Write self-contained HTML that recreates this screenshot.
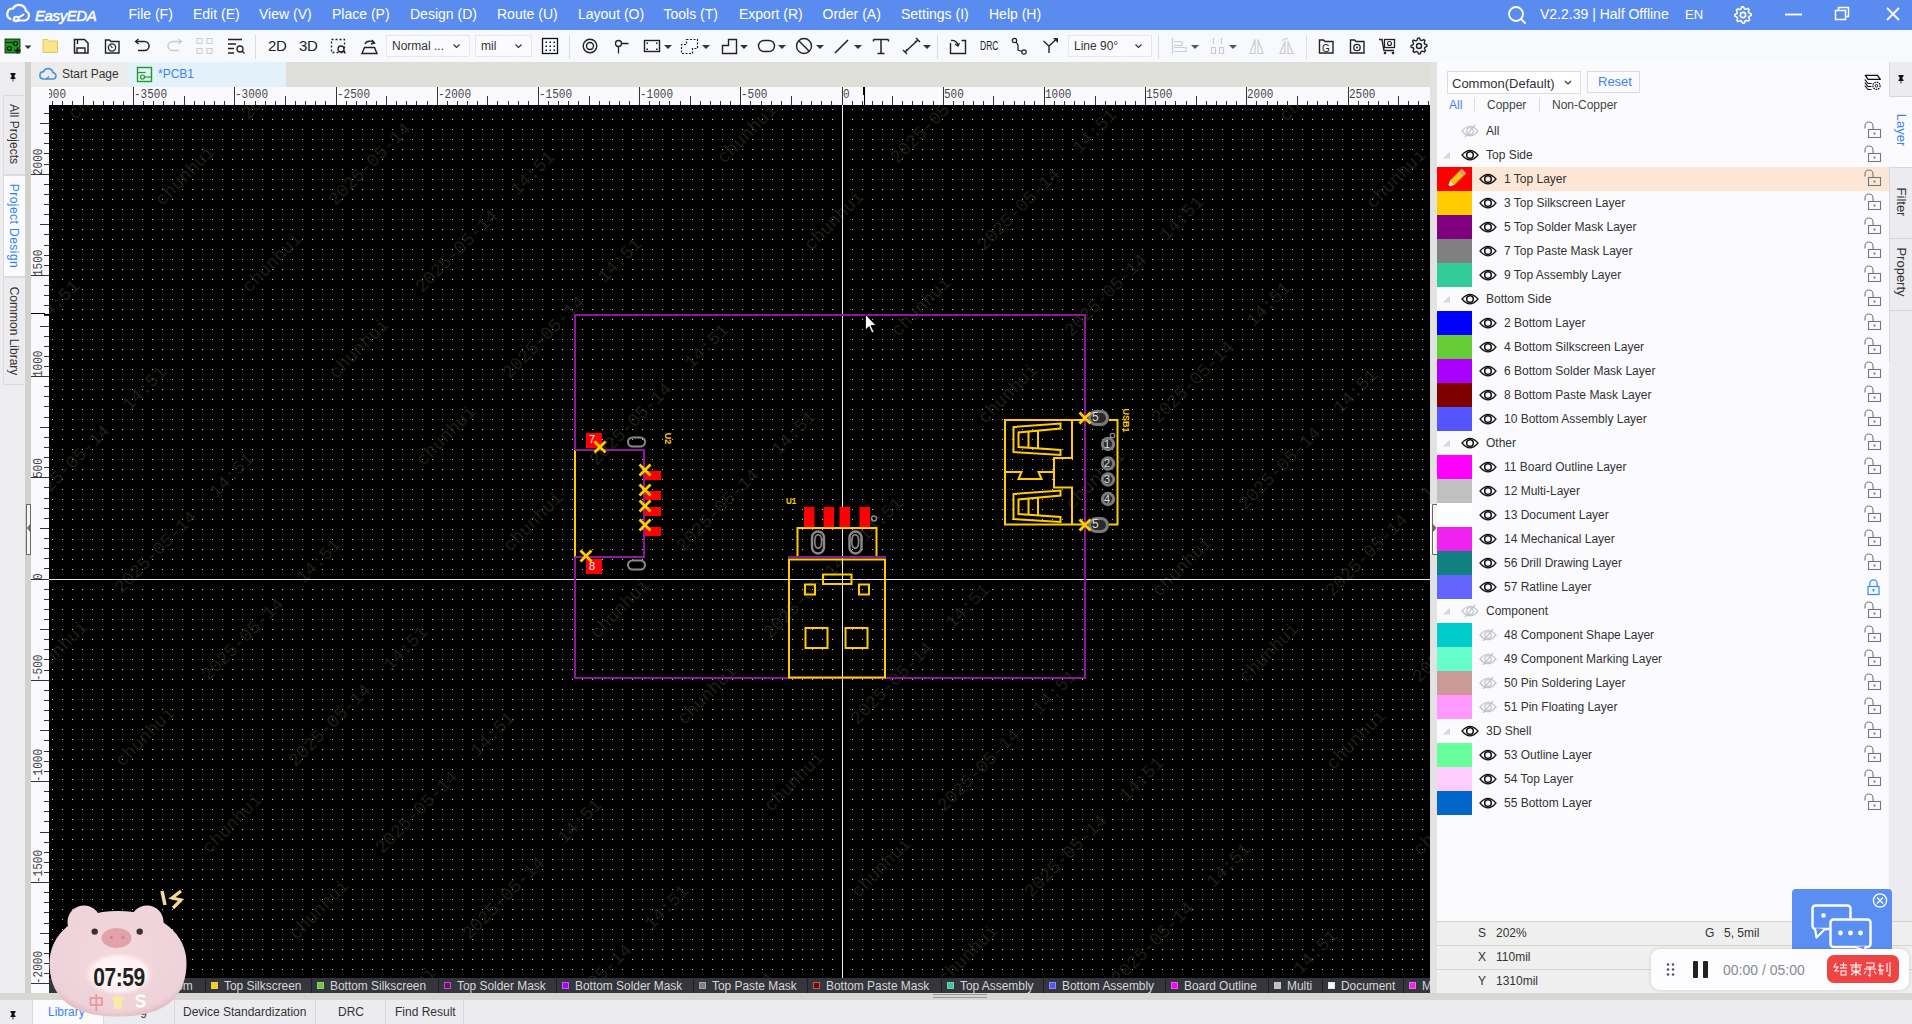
<!DOCTYPE html><html><head><meta charset="utf-8"><style>
*{margin:0;padding:0;box-sizing:border-box}
html,body{width:1912px;height:1024px;overflow:hidden;background:#f4f4f8;font-family:"Liberation Sans",sans-serif}
body{position:relative}
.a{position:absolute}
.t{position:absolute;white-space:nowrap;line-height:1}
svg{position:absolute;overflow:visible}
</style></head><body>
<div class="a" style="left:0px;top:0px;width:1912px;height:30px;background:#5a8cf0;"></div>
<svg style="left:0;top:0" width="110" height="30" viewBox="0 0 110 30">
<path d="M13.5 20.5 H24.5 A5 5 0 0 0 26 11 A7 7 0 0 0 13 8.5 A5.5 5.5 0 0 0 10.5 19" fill="none" stroke="#fff" stroke-width="2.2" stroke-linecap="round"/>
<circle cx="16.3" cy="19" r="2.3" fill="none" stroke="#fff" stroke-width="2"/>
<path d="M18.3 17.6 L23.5 14.6" stroke="#fff" stroke-width="2" stroke-linecap="round"/>
</svg>
<div class="t" style="left:35px;top:8px;font-size:15px;color:#fff;font-weight:normal;font-family:'Liberation Sans',sans-serif;font-style:italic;letter-spacing:-0.4px;-webkit-text-stroke:0.5px #fff">EasyEDA</div>
<div class="t" style="left:128.5px;top:7px;font-size:14px;color:#fff;font-weight:normal;font-family:'Liberation Sans',sans-serif;">File (F)</div>
<div class="t" style="left:193px;top:7px;font-size:14px;color:#fff;font-weight:normal;font-family:'Liberation Sans',sans-serif;">Edit (E)</div>
<div class="t" style="left:259px;top:7px;font-size:14px;color:#fff;font-weight:normal;font-family:'Liberation Sans',sans-serif;">View (V)</div>
<div class="t" style="left:332px;top:7px;font-size:14px;color:#fff;font-weight:normal;font-family:'Liberation Sans',sans-serif;">Place (P)</div>
<div class="t" style="left:410px;top:7px;font-size:14px;color:#fff;font-weight:normal;font-family:'Liberation Sans',sans-serif;">Design (D)</div>
<div class="t" style="left:497px;top:7px;font-size:14px;color:#fff;font-weight:normal;font-family:'Liberation Sans',sans-serif;">Route (U)</div>
<div class="t" style="left:578px;top:7px;font-size:14px;color:#fff;font-weight:normal;font-family:'Liberation Sans',sans-serif;">Layout (O)</div>
<div class="t" style="left:663.5px;top:7px;font-size:14px;color:#fff;font-weight:normal;font-family:'Liberation Sans',sans-serif;">Tools (T)</div>
<div class="t" style="left:739px;top:7px;font-size:14px;color:#fff;font-weight:normal;font-family:'Liberation Sans',sans-serif;">Export (R)</div>
<div class="t" style="left:822.5px;top:7px;font-size:14px;color:#fff;font-weight:normal;font-family:'Liberation Sans',sans-serif;">Order (A)</div>
<div class="t" style="left:901px;top:7px;font-size:14px;color:#fff;font-weight:normal;font-family:'Liberation Sans',sans-serif;">Settings (I)</div>
<div class="t" style="left:989px;top:7px;font-size:14px;color:#fff;font-weight:normal;font-family:'Liberation Sans',sans-serif;">Help (H)</div>
<svg style="left:1505px;top:4px" width="24" height="22" viewBox="0 0 24 22">
<circle cx="11" cy="10" r="7" fill="none" stroke="#fff" stroke-width="1.8"/><path d="M16 15 L20 19" stroke="#fff" stroke-width="1.8" stroke-linecap="round"/></svg>
<div class="t" style="left:1540px;top:7px;font-size:14px;color:#fff;font-weight:normal;font-family:'Liberation Sans',sans-serif;">V2.2.39 | Half Offline</div>
<div class="t" style="left:1685px;top:8px;font-size:13px;color:#fff;font-weight:normal;font-family:'Liberation Sans',sans-serif;">EN</div>
<svg style="left:1730px;top:2px" width="26" height="26" viewBox="0 0 26 26"><path d="M21.11 11.80 L21.19 13.40 L19.11 14.53 L18.70 15.69 L19.59 17.88 L18.51 19.08 L16.24 18.40 L15.12 18.93 L14.20 21.11 L12.60 21.19 L11.47 19.11 L10.31 18.70 L8.12 19.59 L6.92 18.51 L7.60 16.24 L7.07 15.12 L4.89 14.20 L4.81 12.60 L6.89 11.47 L7.30 10.31 L6.41 8.12 L7.49 6.92 L9.76 7.60 L10.88 7.07 L11.80 4.89 L13.40 4.81 L14.53 6.89 L15.69 7.30 L17.88 6.41 L19.08 7.49 L18.40 9.76 L18.93 10.88Z" fill="none" stroke="#fff" stroke-width="1.6" stroke-linejoin="round"/><circle cx="13" cy="13" r="2.65" fill="none" stroke="#fff" stroke-width="1.6"/></svg>
<svg style="left:1780px;top:0" width="132" height="30" viewBox="0 0 132 30">
<path d="M5 14.5 H22" stroke="#fff" stroke-width="1.8"/>
<rect x="55.5" y="10.5" width="10" height="9" fill="none" stroke="#fff" stroke-width="1.5"/>
<path d="M58.5 10.5 V7.5 H68.5 V16.5 H65.5" fill="none" stroke="#fff" stroke-width="1.5"/>
<path d="M107 8 L119 20 M119 8 L107 20" stroke="#fff" stroke-width="1.8"/>
</svg>
<div class="a" style="left:0px;top:30px;width:1912px;height:32px;background:#f8f9fd;"></div>
<svg style="left:0;top:0" width="1912" height="62" viewBox="0 0 1912 62"><rect x="5" y="39" width="15" height="14" fill="#1a9a1a" stroke="#111" stroke-width="0.8"/><circle cx="9.3" cy="48.5" r="2" fill="none" stroke="#111" stroke-width="1.2"/><circle cx="15.5" cy="43.5" r="2" fill="none" stroke="#111" stroke-width="1.2"/><path d="M6 42.5 h6 l2 1.5" fill="none" stroke="#111" stroke-width="1"/><path d="M17.5 47.5 v6 M14.5 50.5 h6" stroke="#111" stroke-width="1.5" fill="none"/><path d="M24.5 45.5 h7 l-3.5 3.5z" fill="#333"/><path d="M43 39.5 h5 l1.5 1.5 h8 v11.5 h-14.5z" fill="#f7e48c" stroke="#e3c65a" stroke-width="1"/><path d="M74.5 39.5 h10 l3.5 3.5 v10 h-13.5z" fill="none" stroke="#222" stroke-width="1.5"/><path d="M77 53 v-5 h8 v5 M77.5 40 v4" fill="none" stroke="#222" stroke-width="1.4"/><path d="M105.5 40 h4 l1.5 1.5 h8 v11.5 h-13.5z" fill="none" stroke="#222" stroke-width="1.4"/><circle cx="112" cy="47.5" r="3.6" fill="none" stroke="#222" stroke-width="1.3"/><path d="M110.5 45.5 l2 2.5" stroke="#222" stroke-width="1.2"/><path d="M136 41.5 h8.5 a4.5 4.5 0 0 1 0 9 h-6.5" fill="none" stroke="#222" stroke-width="1.5"/><path d="M138.5 39 l-3 2.5 l3 2.5" fill="none" stroke="#222" stroke-width="1.3"/><path d="M181 41.5 h-8.5 a4.5 4.5 0 0 0 0 9 h6.5" fill="none" stroke="#ccc" stroke-width="1.5"/><path d="M178.5 39 l3 2.5 l-3 2.5" fill="none" stroke="#ccc" stroke-width="1.3"/><rect x="197" y="38.5" width="5" height="5" fill="none" stroke="#ccc"/><rect x="207" y="38.5" width="5" height="5" fill="none" stroke="#ccc"/><rect x="197" y="48.5" width="5" height="5" fill="none" stroke="#ccc"/><rect x="207" y="48.5" width="5" height="5" fill="none" stroke="#ccc"/><path d="M228 39.5 h14 M228 44 h8 M228 48.5 h6 M228 53 h6" stroke="#222" stroke-width="1.3"/><circle cx="240" cy="49" r="3" fill="none" stroke="#222" stroke-width="1.3"/><path d="M242 51 l2.5 2.5" stroke="#222" stroke-width="1.3"/><path d="M255.5 35 v24" stroke="#ddd" stroke-width="1"/><rect x="331.5" y="39.5" width="13" height="13" fill="none" stroke="#222" stroke-width="1.3" stroke-dasharray="2 2"/><circle cx="341" cy="49" r="3" fill="#f8f9fd" stroke="#222" stroke-width="1.3"/><path d="M343 51 l2.5 2.5" stroke="#222" stroke-width="1.3"/><path d="M362 53.5 h15 l-2.5 -6 h-10z M365 44 a5 4 0 0 1 9 -1 M372 40 l2.5 3 l-3.5 1" fill="none" stroke="#222" stroke-width="1.4"/><rect x="386.5" y="35.5" width="83" height="21" fill="#fbfbff" stroke="#dde" stroke-width="1" stroke-dasharray="2 1"/><path d="M453.5 44.5 l3 3 l3 -3" fill="none" stroke="#333" stroke-width="1.2"/><rect x="475.5" y="35.5" width="56" height="21" fill="#fbfbff" stroke="#dde" stroke-width="1" stroke-dasharray="2 1"/><path d="M515.5 44.5 l3 3 l3 -3" fill="none" stroke="#333" stroke-width="1.2"/><rect x="542.5" y="38.5" width="15" height="15" fill="none" stroke="#111" stroke-width="1.3"/><rect x="545.5" y="41.5" width="1.5" height="1.5" fill="#111"/><rect x="545.5" y="45.5" width="1.5" height="1.5" fill="#111"/><rect x="545.5" y="49.5" width="1.5" height="1.5" fill="#111"/><rect x="549.5" y="41.5" width="1.5" height="1.5" fill="#111"/><rect x="549.5" y="45.5" width="1.5" height="1.5" fill="#111"/><rect x="549.5" y="49.5" width="1.5" height="1.5" fill="#111"/><rect x="553.5" y="41.5" width="1.5" height="1.5" fill="#111"/><rect x="553.5" y="45.5" width="1.5" height="1.5" fill="#111"/><rect x="553.5" y="49.5" width="1.5" height="1.5" fill="#111"/><path d="M569.5 35 v24" stroke="#ddd" stroke-width="1"/><circle cx="590" cy="46" r="6.8" fill="none" stroke="#222" stroke-width="1.4"/><circle cx="590" cy="46" r="3.5" fill="none" stroke="#222" stroke-width="1.4"/><circle cx="618.5" cy="43.5" r="3" fill="none" stroke="#222" stroke-width="1.3"/><path d="M618.5 46.5 v7 M621.5 43.5 h7" stroke="#222" stroke-width="1.3"/><rect x="644.5" y="40.5" width="15" height="11" fill="none" stroke="#222" stroke-width="1.4"/><rect x="646.5" y="42.5" width="1.5" height="1.5" fill="#222"/><rect x="656" y="42.5" width="1.5" height="1.5" fill="#222"/><rect x="646.5" y="48.5" width="1.5" height="1.5" fill="#222"/><rect x="656" y="48.5" width="1.5" height="1.5" fill="#222"/><path d="M664 45 h8 l-4 4z" fill="#333"/><path d="M686.5 39.5 h11 v9 h-5 v5 h-11 v-9 h5z" fill="none" stroke="#222" stroke-width="1.2" stroke-dasharray="2 1.5"/><path d="M702 45 h8 l-4 4z" fill="#333"/><path d="M722.5 53.5 v-8 h6 v-6 h8 v14z" fill="none" stroke="#222" stroke-width="1.4"/><path d="M740 45 h8 l-4 4z" fill="#333"/><rect x="758.5" y="40.5" width="16" height="11" rx="5.5" fill="none" stroke="#222" stroke-width="1.4"/><path d="M778 45 h8 l-4 4z" fill="#333"/><circle cx="804" cy="46" r="7.5" fill="none" stroke="#222" stroke-width="1.4"/><path d="M799 41 l10 10" stroke="#222" stroke-width="1.4"/><path d="M816 45 h8 l-4 4z" fill="#333"/><path d="M835 53 l13 -13" stroke="#222" stroke-width="1.6"/><path d="M854 45 h8 l-4 4z" fill="#333"/><path d="M873.5 39.5 h15 M881 39.5 v14 M877.5 53.5 h7 M873.5 39.5 v2 M888.5 39.5 v2" fill="none" stroke="#222" stroke-width="1.5"/><path d="M905 52 l13 -12 M903 50 l4 4 M916 38 l4 4 M906 49.5 l1.5 1.5 M915 41 l1.5 1.5" stroke="#222" stroke-width="1.4"/><path d="M923 45 h8 l-4 4z" fill="#333"/><path d="M937.5 35 v24" stroke="#ddd" stroke-width="1"/><path d="M950.5 43 v10.5 h15 v-13 h-4" fill="none" stroke="#222" stroke-width="1.4"/><path d="M951 40.5 a6 6 0 0 1 7 4.5 M955 44 l3 2 l1.5 -3" fill="none" stroke="#222" stroke-width="1.3"/><circle cx="1014.5" cy="40.5" r="2.2" fill="none" stroke="#222" stroke-width="1.2"/><circle cx="1024" cy="52" r="2.2" fill="none" stroke="#222" stroke-width="1.2"/><path d="M1016 42 l2 3 v5 l4 1.5" fill="none" stroke="#222" stroke-width="1.3"/><path d="M1043.5 41 l5.5 5 v7 M1049 46 l8 -7.5" fill="none" stroke="#222" stroke-width="1.4"/><path d="M1053.5 38.5 h4 v4" fill="#222" stroke="#222" stroke-width="1"/><rect x="1068.5" y="35.5" width="83" height="21" fill="#fbfbff" stroke="#dde" stroke-width="1" stroke-dasharray="2 1"/><path d="M1135.5 44.5 l3 3 l3 -3" fill="none" stroke="#333" stroke-width="1.2"/><path d="M1158.5 35 v24" stroke="#ddd" stroke-width="1"/><path d="M1172.5 38 v16 M1174 41.5 h8 v4 h-8 M1174 47.5 h12 v4 h-12" fill="none" stroke="#ccc" stroke-width="1.2"/><path d="M1191 45 h8 l-4 4z" fill="#555"/><path d="M1213.5 38 v6 M1221.5 38 v6 M1211.5 47.5 h4 v6 h-4z M1219.5 47.5 h4 v6 h-4z" fill="none" stroke="#ccc" stroke-width="1.2"/><path d="M1229 45 h8 l-4 4z" fill="#555"/><path d="M1250 53.5 l5 -14 v14z M1258 39.5 l5 14 h-5z" fill="none" stroke="#ccc" stroke-width="1.2"/><path d="M1280 53.5 l5 -12 v12z M1288 41.5 l5 12 h-5z M1282 41 a5 4 0 0 1 6 -2" fill="none" stroke="#ccc" stroke-width="1.2"/><path d="M1306.5 35 v24" stroke="#ddd" stroke-width="1"/><path d="M1319.5 40 h4 l1.5 1.5 h8 v11.5 h-13.5z" fill="none" stroke="#222" stroke-width="1.4"/><path d="M1350.5 40 h4 l1.5 1.5 h8 v11.5 h-13.5z" fill="none" stroke="#222" stroke-width="1.4"/><circle cx="1357" cy="47.5" r="3.2" fill="none" stroke="#222" stroke-width="1.3"/><circle cx="1357" cy="47.5" r="1" fill="#222"/><path d="M1379 39.5 h3 l2 11 h10" fill="none" stroke="#222" stroke-width="1.4"/><rect x="1384.5" y="39.5" width="10" height="8" fill="none" stroke="#222" stroke-width="1.3"/><circle cx="1389.5" cy="43.5" r="2" fill="none" stroke="#222" stroke-width="1.1"/><circle cx="1385" cy="53" r="1.3" fill="#222"/><circle cx="1393" cy="53" r="1.3" fill="#222"/><path d="M1426.91 44.83 L1426.99 46.39 L1424.82 47.46 L1424.42 48.57 L1425.43 50.77 L1424.37 51.93 L1422.08 51.15 L1421.02 51.65 L1420.17 53.91 L1418.61 53.99 L1417.54 51.82 L1416.43 51.42 L1414.23 52.43 L1413.07 51.37 L1413.85 49.08 L1413.35 48.02 L1411.09 47.17 L1411.01 45.61 L1413.18 44.54 L1413.58 43.43 L1412.57 41.23 L1413.63 40.07 L1415.92 40.85 L1416.98 40.35 L1417.83 38.09 L1419.39 38.01 L1420.46 40.18 L1421.57 40.58 L1423.77 39.57 L1424.93 40.63 L1424.15 42.92 L1424.65 43.98Z" fill="none" stroke="#222" stroke-width="1.4" stroke-linejoin="round"/><circle cx="1419" cy="46" r="2.52" fill="none" stroke="#222" stroke-width="1.4"/></svg>
<div class="t" style="left:268px;top:38px;font-size:15px;color:#222;font-weight:normal;font-family:'Liberation Sans',sans-serif;letter-spacing:-0.3px">2D</div>
<div class="t" style="left:299px;top:38px;font-size:15px;color:#222;font-weight:normal;font-family:'Liberation Sans',sans-serif;letter-spacing:-0.3px">3D</div>
<div class="t" style="left:980px;top:40px;font-size:12.5px;color:#222;font-weight:normal;font-family:'Liberation Sans',sans-serif;transform-origin:0 0;transform:scaleX(0.68)">DRC</div>
<div class="t" style="left:1322px;top:44px;font-size:10px;color:#222;font-weight:normal;font-family:'Liberation Sans',sans-serif;">G</div>
<div class="t" style="left:392px;top:40px;font-size:12px;color:#333;font-weight:normal;font-family:'Liberation Sans',sans-serif;">Normal ...</div>
<div class="t" style="left:481px;top:40px;font-size:12px;color:#333;font-weight:normal;font-family:'Liberation Sans',sans-serif;">mil</div>
<div class="t" style="left:1074px;top:40px;font-size:12px;color:#333;font-weight:normal;font-family:'Liberation Sans',sans-serif;">Line 90°</div>
<div class="a" style="left:0px;top:62px;width:25px;height:931px;background:#ededf0;"></div>
<div class="a" style="left:25px;top:62px;width:6px;height:931px;background:#d2d2cc;"></div>
<svg style="left:25px;top:500px" width="6" height="60" viewBox="0 0 6 60"><rect x="1.5" y="4.5" width="4" height="50" fill="#f6f6f8" stroke="#6a6a5a" stroke-width="1"/><path d="M5 24 L2 28 L5 32z" fill="#6a6a5a"/></svg>
<svg style="left:9.5px;top:73px" width="6" height="9" viewBox="0 0 6 9"><path d="M0.5 0 H5.5 V1.5 L4.5 2 V4 L5.5 5 V6 H0.5 V5 L1.5 4 V2 L0.5 1.5Z" fill="#111"/><path d="M3 6 V8.5" stroke="#333" stroke-width="1"/></svg>
<div class="a" style="left:3px;top:95px;width:22px;height:80px;background:#ececf0;border:1px solid #dcdce0;border-right:none"></div>
<div class="a" style="left:3px;top:175px;width:22px;height:102px;background:#fbfbfe;border:1px solid #dcdce0;border-right:none"></div>
<div class="a" style="left:3px;top:277px;width:22px;height:108px;background:#ececf0;border:1px solid #dcdce0;border-right:none"></div>
<div class="t" style="left:14px;top:133.5px;font-size:12px;color:#333;transform:translate(-50%,-50%) rotate(90deg)">All Projects</div>
<div class="t" style="left:14px;top:225.5px;font-size:12px;color:#2f7ff0;letter-spacing:0.45px;transform:translate(-50%,-50%) rotate(90deg)">Project Design</div>
<div class="t" style="left:14px;top:331px;font-size:12px;color:#333;transform:translate(-50%,-50%) rotate(90deg)">Common Library</div>
<div class="a" style="left:31px;top:62px;width:1399px;height:25px;background:#dedfd6;"></div>
<div class="a" style="left:31px;top:62px;width:96px;height:25px;background:#ececea;"></div>
<div class="a" style="left:127px;top:62px;width:159px;height:25px;background:#e2f1fa;"></div>
<svg style="left:0;top:62px" width="300" height="25" viewBox="0 0 300 25">
<path d="M42.5 17 h10 a3.2 3.2 0 0 0 0.5 -6.4 a5 5 0 0 0 -9.5 -1 a3.8 3.8 0 0 0 -1 7.4" fill="none" stroke="#4a90e2" stroke-width="1.6"/>
<path d="M46 17.5 l3 -3" stroke="#4a90e2" stroke-width="1.4"/>
<rect x="137.5" y="5.5" width="14" height="14" fill="none" stroke="#1aa01a" stroke-width="1.4"/>
<path d="M137.5 10.5 h8" stroke="#1aa01a" stroke-width="1.2"/>
<circle cx="142.5" cy="15" r="2" fill="none" stroke="#1aa01a" stroke-width="1.2"/><path d="M144.5 15 h7" stroke="#1aa01a" stroke-width="1.2"/>
</svg>
<div class="t" style="left:62px;top:68px;font-size:12px;color:#333;font-weight:normal;font-family:'Liberation Sans',sans-serif;">Start Page</div>
<div class="t" style="left:158px;top:68px;font-size:12px;color:#3b82f6;font-weight:normal;font-family:'Liberation Sans',sans-serif;">*PCB1</div>
<div class="a" style="left:31px;top:87px;width:1399px;height:18px;background:#fafafe;"></div>
<div class="a" style="left:31px;top:105px;width:18px;height:888px;background:#fafafe;"></div>
<svg style="left:0;top:0" width="1440" height="1000" viewBox="0 0 1440 1000"><path d="M52.5 101 V105" stroke="#333" stroke-width="1"/><path d="M62.5 101 V105" stroke="#333" stroke-width="1"/><path d="M72.5 101 V105" stroke="#333" stroke-width="1"/><path d="M83.5 96 V105" stroke="#333" stroke-width="1"/><path d="M93.5 101 V105" stroke="#333" stroke-width="1"/><path d="M103.5 101 V105" stroke="#333" stroke-width="1"/><path d="M113.5 101 V105" stroke="#333" stroke-width="1"/><path d="M123.5 101 V105" stroke="#333" stroke-width="1"/><path d="M133.5 87 V105" stroke="#333" stroke-width="1"/><path d="M143.5 101 V105" stroke="#333" stroke-width="1"/><path d="M153.5 101 V105" stroke="#333" stroke-width="1"/><path d="M163.5 101 V105" stroke="#333" stroke-width="1"/><path d="M174.5 101 V105" stroke="#333" stroke-width="1"/><path d="M184.5 96 V105" stroke="#333" stroke-width="1"/><path d="M194.5 101 V105" stroke="#333" stroke-width="1"/><path d="M204.5 101 V105" stroke="#333" stroke-width="1"/><path d="M214.5 101 V105" stroke="#333" stroke-width="1"/><path d="M224.5 101 V105" stroke="#333" stroke-width="1"/><path d="M234.5 87 V105" stroke="#333" stroke-width="1"/><path d="M244.5 101 V105" stroke="#333" stroke-width="1"/><path d="M255.5 101 V105" stroke="#333" stroke-width="1"/><path d="M265.5 101 V105" stroke="#333" stroke-width="1"/><path d="M275.5 101 V105" stroke="#333" stroke-width="1"/><path d="M285.5 96 V105" stroke="#333" stroke-width="1"/><path d="M295.5 101 V105" stroke="#333" stroke-width="1"/><path d="M305.5 101 V105" stroke="#333" stroke-width="1"/><path d="M315.5 101 V105" stroke="#333" stroke-width="1"/><path d="M325.5 101 V105" stroke="#333" stroke-width="1"/><path d="M336.5 87 V105" stroke="#333" stroke-width="1"/><path d="M346.5 101 V105" stroke="#333" stroke-width="1"/><path d="M356.5 101 V105" stroke="#333" stroke-width="1"/><path d="M366.5 101 V105" stroke="#333" stroke-width="1"/><path d="M376.5 101 V105" stroke="#333" stroke-width="1"/><path d="M386.5 96 V105" stroke="#333" stroke-width="1"/><path d="M396.5 101 V105" stroke="#333" stroke-width="1"/><path d="M406.5 101 V105" stroke="#333" stroke-width="1"/><path d="M416.5 101 V105" stroke="#333" stroke-width="1"/><path d="M427.5 101 V105" stroke="#333" stroke-width="1"/><path d="M437.5 87 V105" stroke="#333" stroke-width="1"/><path d="M447.5 101 V105" stroke="#333" stroke-width="1"/><path d="M457.5 101 V105" stroke="#333" stroke-width="1"/><path d="M467.5 101 V105" stroke="#333" stroke-width="1"/><path d="M477.5 101 V105" stroke="#333" stroke-width="1"/><path d="M487.5 96 V105" stroke="#333" stroke-width="1"/><path d="M497.5 101 V105" stroke="#333" stroke-width="1"/><path d="M508.5 101 V105" stroke="#333" stroke-width="1"/><path d="M518.5 101 V105" stroke="#333" stroke-width="1"/><path d="M528.5 101 V105" stroke="#333" stroke-width="1"/><path d="M538.5 87 V105" stroke="#333" stroke-width="1"/><path d="M548.5 101 V105" stroke="#333" stroke-width="1"/><path d="M558.5 101 V105" stroke="#333" stroke-width="1"/><path d="M568.5 101 V105" stroke="#333" stroke-width="1"/><path d="M578.5 101 V105" stroke="#333" stroke-width="1"/><path d="M589.5 96 V105" stroke="#333" stroke-width="1"/><path d="M599.5 101 V105" stroke="#333" stroke-width="1"/><path d="M609.5 101 V105" stroke="#333" stroke-width="1"/><path d="M619.5 101 V105" stroke="#333" stroke-width="1"/><path d="M629.5 101 V105" stroke="#333" stroke-width="1"/><path d="M639.5 87 V105" stroke="#333" stroke-width="1"/><path d="M649.5 101 V105" stroke="#333" stroke-width="1"/><path d="M659.5 101 V105" stroke="#333" stroke-width="1"/><path d="M669.5 101 V105" stroke="#333" stroke-width="1"/><path d="M680.5 101 V105" stroke="#333" stroke-width="1"/><path d="M690.5 96 V105" stroke="#333" stroke-width="1"/><path d="M700.5 101 V105" stroke="#333" stroke-width="1"/><path d="M710.5 101 V105" stroke="#333" stroke-width="1"/><path d="M720.5 101 V105" stroke="#333" stroke-width="1"/><path d="M730.5 101 V105" stroke="#333" stroke-width="1"/><path d="M740.5 87 V105" stroke="#333" stroke-width="1"/><path d="M750.5 101 V105" stroke="#333" stroke-width="1"/><path d="M761.5 101 V105" stroke="#333" stroke-width="1"/><path d="M771.5 101 V105" stroke="#333" stroke-width="1"/><path d="M781.5 101 V105" stroke="#333" stroke-width="1"/><path d="M791.5 96 V105" stroke="#333" stroke-width="1"/><path d="M801.5 101 V105" stroke="#333" stroke-width="1"/><path d="M811.5 101 V105" stroke="#333" stroke-width="1"/><path d="M821.5 101 V105" stroke="#333" stroke-width="1"/><path d="M831.5 101 V105" stroke="#333" stroke-width="1"/><path d="M842.5 87 V105" stroke="#333" stroke-width="1"/><path d="M852.5 101 V105" stroke="#333" stroke-width="1"/><path d="M862.5 101 V105" stroke="#333" stroke-width="1"/><path d="M872.5 101 V105" stroke="#333" stroke-width="1"/><path d="M882.5 101 V105" stroke="#333" stroke-width="1"/><path d="M892.5 96 V105" stroke="#333" stroke-width="1"/><path d="M902.5 101 V105" stroke="#333" stroke-width="1"/><path d="M912.5 101 V105" stroke="#333" stroke-width="1"/><path d="M922.5 101 V105" stroke="#333" stroke-width="1"/><path d="M933.5 101 V105" stroke="#333" stroke-width="1"/><path d="M943.5 87 V105" stroke="#333" stroke-width="1"/><path d="M953.5 101 V105" stroke="#333" stroke-width="1"/><path d="M963.5 101 V105" stroke="#333" stroke-width="1"/><path d="M973.5 101 V105" stroke="#333" stroke-width="1"/><path d="M983.5 101 V105" stroke="#333" stroke-width="1"/><path d="M993.5 96 V105" stroke="#333" stroke-width="1"/><path d="M1003.5 101 V105" stroke="#333" stroke-width="1"/><path d="M1014.5 101 V105" stroke="#333" stroke-width="1"/><path d="M1024.5 101 V105" stroke="#333" stroke-width="1"/><path d="M1034.5 101 V105" stroke="#333" stroke-width="1"/><path d="M1044.5 87 V105" stroke="#333" stroke-width="1"/><path d="M1054.5 101 V105" stroke="#333" stroke-width="1"/><path d="M1064.5 101 V105" stroke="#333" stroke-width="1"/><path d="M1074.5 101 V105" stroke="#333" stroke-width="1"/><path d="M1084.5 101 V105" stroke="#333" stroke-width="1"/><path d="M1095.5 96 V105" stroke="#333" stroke-width="1"/><path d="M1105.5 101 V105" stroke="#333" stroke-width="1"/><path d="M1115.5 101 V105" stroke="#333" stroke-width="1"/><path d="M1125.5 101 V105" stroke="#333" stroke-width="1"/><path d="M1135.5 101 V105" stroke="#333" stroke-width="1"/><path d="M1145.5 87 V105" stroke="#333" stroke-width="1"/><path d="M1155.5 101 V105" stroke="#333" stroke-width="1"/><path d="M1165.5 101 V105" stroke="#333" stroke-width="1"/><path d="M1175.5 101 V105" stroke="#333" stroke-width="1"/><path d="M1186.5 101 V105" stroke="#333" stroke-width="1"/><path d="M1196.5 96 V105" stroke="#333" stroke-width="1"/><path d="M1206.5 101 V105" stroke="#333" stroke-width="1"/><path d="M1216.5 101 V105" stroke="#333" stroke-width="1"/><path d="M1226.5 101 V105" stroke="#333" stroke-width="1"/><path d="M1236.5 101 V105" stroke="#333" stroke-width="1"/><path d="M1246.5 87 V105" stroke="#333" stroke-width="1"/><path d="M1256.5 101 V105" stroke="#333" stroke-width="1"/><path d="M1267.5 101 V105" stroke="#333" stroke-width="1"/><path d="M1277.5 101 V105" stroke="#333" stroke-width="1"/><path d="M1287.5 101 V105" stroke="#333" stroke-width="1"/><path d="M1297.5 96 V105" stroke="#333" stroke-width="1"/><path d="M1307.5 101 V105" stroke="#333" stroke-width="1"/><path d="M1317.5 101 V105" stroke="#333" stroke-width="1"/><path d="M1327.5 101 V105" stroke="#333" stroke-width="1"/><path d="M1337.5 101 V105" stroke="#333" stroke-width="1"/><path d="M1348.5 87 V105" stroke="#333" stroke-width="1"/><path d="M1358.5 101 V105" stroke="#333" stroke-width="1"/><path d="M1368.5 101 V105" stroke="#333" stroke-width="1"/><path d="M1378.5 101 V105" stroke="#333" stroke-width="1"/><path d="M1388.5 101 V105" stroke="#333" stroke-width="1"/><path d="M1398.5 96 V105" stroke="#333" stroke-width="1"/><path d="M1408.5 101 V105" stroke="#333" stroke-width="1"/><path d="M1418.5 101 V105" stroke="#333" stroke-width="1"/><path d="M1428.5 101 V105" stroke="#333" stroke-width="1"/>
<path d="M31 983.5 H49" stroke="#333" stroke-width="1"/><path d="M44 973.5 H49" stroke="#333" stroke-width="1"/><path d="M44 963.5 H49" stroke="#333" stroke-width="1"/><path d="M44 953.5 H49" stroke="#333" stroke-width="1"/><path d="M44 943.5 H49" stroke="#333" stroke-width="1"/><path d="M40 933.5 H49" stroke="#333" stroke-width="1"/><path d="M44 923.5 H49" stroke="#333" stroke-width="1"/><path d="M44 912.5 H49" stroke="#333" stroke-width="1"/><path d="M44 902.5 H49" stroke="#333" stroke-width="1"/><path d="M44 892.5 H49" stroke="#333" stroke-width="1"/><path d="M31 882.5 H49" stroke="#333" stroke-width="1"/><path d="M44 872.5 H49" stroke="#333" stroke-width="1"/><path d="M44 862.5 H49" stroke="#333" stroke-width="1"/><path d="M44 852.5 H49" stroke="#333" stroke-width="1"/><path d="M44 842.5 H49" stroke="#333" stroke-width="1"/><path d="M40 832.5 H49" stroke="#333" stroke-width="1"/><path d="M44 821.5 H49" stroke="#333" stroke-width="1"/><path d="M44 811.5 H49" stroke="#333" stroke-width="1"/><path d="M44 801.5 H49" stroke="#333" stroke-width="1"/><path d="M44 791.5 H49" stroke="#333" stroke-width="1"/><path d="M31 781.5 H49" stroke="#333" stroke-width="1"/><path d="M44 771.5 H49" stroke="#333" stroke-width="1"/><path d="M44 761.5 H49" stroke="#333" stroke-width="1"/><path d="M44 751.5 H49" stroke="#333" stroke-width="1"/><path d="M44 740.5 H49" stroke="#333" stroke-width="1"/><path d="M40 730.5 H49" stroke="#333" stroke-width="1"/><path d="M44 720.5 H49" stroke="#333" stroke-width="1"/><path d="M44 710.5 H49" stroke="#333" stroke-width="1"/><path d="M44 700.5 H49" stroke="#333" stroke-width="1"/><path d="M44 690.5 H49" stroke="#333" stroke-width="1"/><path d="M31 680.5 H49" stroke="#333" stroke-width="1"/><path d="M44 670.5 H49" stroke="#333" stroke-width="1"/><path d="M44 659.5 H49" stroke="#333" stroke-width="1"/><path d="M44 649.5 H49" stroke="#333" stroke-width="1"/><path d="M44 639.5 H49" stroke="#333" stroke-width="1"/><path d="M40 629.5 H49" stroke="#333" stroke-width="1"/><path d="M44 619.5 H49" stroke="#333" stroke-width="1"/><path d="M44 609.5 H49" stroke="#333" stroke-width="1"/><path d="M44 599.5 H49" stroke="#333" stroke-width="1"/><path d="M44 589.5 H49" stroke="#333" stroke-width="1"/><path d="M31 579.5 H49" stroke="#333" stroke-width="1"/><path d="M44 568.5 H49" stroke="#333" stroke-width="1"/><path d="M44 558.5 H49" stroke="#333" stroke-width="1"/><path d="M44 548.5 H49" stroke="#333" stroke-width="1"/><path d="M44 538.5 H49" stroke="#333" stroke-width="1"/><path d="M40 528.5 H49" stroke="#333" stroke-width="1"/><path d="M44 518.5 H49" stroke="#333" stroke-width="1"/><path d="M44 508.5 H49" stroke="#333" stroke-width="1"/><path d="M44 498.5 H49" stroke="#333" stroke-width="1"/><path d="M44 487.5 H49" stroke="#333" stroke-width="1"/><path d="M31 477.5 H49" stroke="#333" stroke-width="1"/><path d="M44 467.5 H49" stroke="#333" stroke-width="1"/><path d="M44 457.5 H49" stroke="#333" stroke-width="1"/><path d="M44 447.5 H49" stroke="#333" stroke-width="1"/><path d="M44 437.5 H49" stroke="#333" stroke-width="1"/><path d="M40 427.5 H49" stroke="#333" stroke-width="1"/><path d="M44 417.5 H49" stroke="#333" stroke-width="1"/><path d="M44 406.5 H49" stroke="#333" stroke-width="1"/><path d="M44 396.5 H49" stroke="#333" stroke-width="1"/><path d="M44 386.5 H49" stroke="#333" stroke-width="1"/><path d="M31 376.5 H49" stroke="#333" stroke-width="1"/><path d="M44 366.5 H49" stroke="#333" stroke-width="1"/><path d="M44 356.5 H49" stroke="#333" stroke-width="1"/><path d="M44 346.5 H49" stroke="#333" stroke-width="1"/><path d="M44 336.5 H49" stroke="#333" stroke-width="1"/><path d="M40 326.5 H49" stroke="#333" stroke-width="1"/><path d="M44 315.5 H49" stroke="#333" stroke-width="1"/><path d="M44 305.5 H49" stroke="#333" stroke-width="1"/><path d="M44 295.5 H49" stroke="#333" stroke-width="1"/><path d="M44 285.5 H49" stroke="#333" stroke-width="1"/><path d="M31 275.5 H49" stroke="#333" stroke-width="1"/><path d="M44 265.5 H49" stroke="#333" stroke-width="1"/><path d="M44 255.5 H49" stroke="#333" stroke-width="1"/><path d="M44 245.5 H49" stroke="#333" stroke-width="1"/><path d="M44 234.5 H49" stroke="#333" stroke-width="1"/><path d="M40 224.5 H49" stroke="#333" stroke-width="1"/><path d="M44 214.5 H49" stroke="#333" stroke-width="1"/><path d="M44 204.5 H49" stroke="#333" stroke-width="1"/><path d="M44 194.5 H49" stroke="#333" stroke-width="1"/><path d="M44 184.5 H49" stroke="#333" stroke-width="1"/><path d="M31 174.5 H49" stroke="#333" stroke-width="1"/><path d="M44 164.5 H49" stroke="#333" stroke-width="1"/><path d="M44 153.5 H49" stroke="#333" stroke-width="1"/><path d="M44 143.5 H49" stroke="#333" stroke-width="1"/><path d="M44 133.5 H49" stroke="#333" stroke-width="1"/><path d="M40 123.5 H49" stroke="#333" stroke-width="1"/><path d="M44 113.5 H49" stroke="#333" stroke-width="1"/></svg>
<div class="a" style="left:863px;top:87px;width:2px;height:8px;background:#000;"></div>
<div class="a" style="left:864px;top:95px;width:1px;height:10px;background:#000;"></div>
<div class="a" style="left:31px;top:313px;width:14px;height:1px;background:#000;"></div>
<div class="a" style="left:44px;top:314px;width:5px;height:1px;background:#000;"></div>
<div class="a" style="left:49px;top:87px;width:1381px;height:18px;overflow:hidden">
<div class="t" style="left:-16px;top:3px;font-size:11px;color:#444;font-family:'Liberation Mono',monospace;transform-origin:0 80%;transform:scaleY(1.17)">-4000</div>
<div class="t" style="left:85px;top:3px;font-size:11px;color:#444;font-family:'Liberation Mono',monospace;transform-origin:0 80%;transform:scaleY(1.17)">-3500</div>
<div class="t" style="left:186px;top:3px;font-size:11px;color:#444;font-family:'Liberation Mono',monospace;transform-origin:0 80%;transform:scaleY(1.17)">-3000</div>
<div class="t" style="left:288px;top:3px;font-size:11px;color:#444;font-family:'Liberation Mono',monospace;transform-origin:0 80%;transform:scaleY(1.17)">-2500</div>
<div class="t" style="left:389px;top:3px;font-size:11px;color:#444;font-family:'Liberation Mono',monospace;transform-origin:0 80%;transform:scaleY(1.17)">-2000</div>
<div class="t" style="left:490px;top:3px;font-size:11px;color:#444;font-family:'Liberation Mono',monospace;transform-origin:0 80%;transform:scaleY(1.17)">-1500</div>
<div class="t" style="left:591px;top:3px;font-size:11px;color:#444;font-family:'Liberation Mono',monospace;transform-origin:0 80%;transform:scaleY(1.17)">-1000</div>
<div class="t" style="left:692px;top:3px;font-size:11px;color:#444;font-family:'Liberation Mono',monospace;transform-origin:0 80%;transform:scaleY(1.17)">-500</div>
<div class="t" style="left:794px;top:3px;font-size:11px;color:#444;font-family:'Liberation Mono',monospace;transform-origin:0 80%;transform:scaleY(1.17)">0</div>
<div class="t" style="left:895px;top:3px;font-size:11px;color:#444;font-family:'Liberation Mono',monospace;transform-origin:0 80%;transform:scaleY(1.17)">500</div>
<div class="t" style="left:996px;top:3px;font-size:11px;color:#444;font-family:'Liberation Mono',monospace;transform-origin:0 80%;transform:scaleY(1.17)">1000</div>
<div class="t" style="left:1097px;top:3px;font-size:11px;color:#444;font-family:'Liberation Mono',monospace;transform-origin:0 80%;transform:scaleY(1.17)">1500</div>
<div class="t" style="left:1198px;top:3px;font-size:11px;color:#444;font-family:'Liberation Mono',monospace;transform-origin:0 80%;transform:scaleY(1.17)">2000</div>
<div class="t" style="left:1300px;top:3px;font-size:11px;color:#444;font-family:'Liberation Mono',monospace;transform-origin:0 80%;transform:scaleY(1.17)">2500</div>
</div>
<div class="t" style="left:33px;top:984px;font-size:11px;color:#444;font-family:'Liberation Mono',monospace;transform-origin:0 0;transform:rotate(-90deg) scaleY(1.17)">-2000</div>
<div class="t" style="left:33px;top:883px;font-size:11px;color:#444;font-family:'Liberation Mono',monospace;transform-origin:0 0;transform:rotate(-90deg) scaleY(1.17)">-1500</div>
<div class="t" style="left:33px;top:782px;font-size:11px;color:#444;font-family:'Liberation Mono',monospace;transform-origin:0 0;transform:rotate(-90deg) scaleY(1.17)">-1000</div>
<div class="t" style="left:33px;top:681px;font-size:11px;color:#444;font-family:'Liberation Mono',monospace;transform-origin:0 0;transform:rotate(-90deg) scaleY(1.17)">-500</div>
<div class="t" style="left:33px;top:580px;font-size:11px;color:#444;font-family:'Liberation Mono',monospace;transform-origin:0 0;transform:rotate(-90deg) scaleY(1.17)">0</div>
<div class="t" style="left:33px;top:478px;font-size:11px;color:#444;font-family:'Liberation Mono',monospace;transform-origin:0 0;transform:rotate(-90deg) scaleY(1.17)">500</div>
<div class="t" style="left:33px;top:377px;font-size:11px;color:#444;font-family:'Liberation Mono',monospace;transform-origin:0 0;transform:rotate(-90deg) scaleY(1.17)">1000</div>
<div class="t" style="left:33px;top:276px;font-size:11px;color:#444;font-family:'Liberation Mono',monospace;transform-origin:0 0;transform:rotate(-90deg) scaleY(1.17)">1500</div>
<div class="t" style="left:33px;top:175px;font-size:11px;color:#444;font-family:'Liberation Mono',monospace;transform-origin:0 0;transform:rotate(-90deg) scaleY(1.17)">2000</div>
<svg style="left:0;top:0" width="1440" height="1000" viewBox="0 0 1440 1000"><defs><pattern id="dots" x="0" y="0" width="10" height="10" patternUnits="userSpaceOnUse"><rect x="2" y="9" width="1" height="1" fill="#c8c8d8"/></pattern><clipPath id="cv"><rect x="49" y="105" width="1381" height="873"/></clipPath></defs><rect x="49" y="105" width="1381" height="873" fill="#000"/><rect x="49" y="105" width="1381" height="873" fill="url(#dots)"/></svg>
<div class="a" style="left:49px;top:105px;width:1381px;height:873px;overflow:hidden">
<div class="t" style="left:-178.0px;top:31.5px;font-size:18px;font-family:'Liberation Mono',monospace;color:#1f1f15;transform-origin:0 100%;transform:rotate(-45deg)">14:51</div>
<div class="t" style="left:29.0px;top:-0.5px;font-size:18px;font-family:'Liberation Mono',monospace;color:#1f1f15;transform-origin:0 100%;transform:rotate(-45deg)">chunhui</div>
<div class="t" style="left:202.0px;top:-0.5px;font-size:18px;font-family:'Liberation Mono',monospace;color:#1f1f15;transform-origin:0 100%;transform:rotate(-45deg)">2025-05-14</div>
<div class="t" style="left:384.0px;top:-10.5px;font-size:18px;font-family:'Liberation Mono',monospace;color:#1f1f15;transform-origin:0 100%;transform:rotate(-45deg)">14:51</div>
<div class="t" style="left:-91.0px;top:118.0px;font-size:18px;font-family:'Liberation Mono',monospace;color:#1f1f15;transform-origin:0 100%;transform:rotate(-45deg)">14:51</div>
<div class="t" style="left:116.0px;top:86.0px;font-size:18px;font-family:'Liberation Mono',monospace;color:#1f1f15;transform-origin:0 100%;transform:rotate(-45deg)">chunhui</div>
<div class="t" style="left:289.0px;top:86.0px;font-size:18px;font-family:'Liberation Mono',monospace;color:#1f1f15;transform-origin:0 100%;transform:rotate(-45deg)">2025-05-14</div>
<div class="t" style="left:471.0px;top:76.0px;font-size:18px;font-family:'Liberation Mono',monospace;color:#1f1f15;transform-origin:0 100%;transform:rotate(-45deg)">14:51</div>
<div class="t" style="left:678.0px;top:44.0px;font-size:18px;font-family:'Liberation Mono',monospace;color:#1f1f15;transform-origin:0 100%;transform:rotate(-45deg)">chunhui</div>
<div class="t" style="left:851.0px;top:44.0px;font-size:18px;font-family:'Liberation Mono',monospace;color:#1f1f15;transform-origin:0 100%;transform:rotate(-45deg)">2025-05-14</div>
<div class="t" style="left:1033.0px;top:34.0px;font-size:18px;font-family:'Liberation Mono',monospace;color:#1f1f15;transform-origin:0 100%;transform:rotate(-45deg)">14:51</div>
<div class="t" style="left:1240.0px;top:2.0px;font-size:18px;font-family:'Liberation Mono',monospace;color:#1f1f15;transform-origin:0 100%;transform:rotate(-45deg)">chunhui</div>
<div class="t" style="left:-186.0px;top:214.5px;font-size:18px;font-family:'Liberation Mono',monospace;color:#1f1f15;transform-origin:0 100%;transform:rotate(-45deg)">2025-05-14</div>
<div class="t" style="left:-4.0px;top:204.5px;font-size:18px;font-family:'Liberation Mono',monospace;color:#1f1f15;transform-origin:0 100%;transform:rotate(-45deg)">14:51</div>
<div class="t" style="left:203.0px;top:172.5px;font-size:18px;font-family:'Liberation Mono',monospace;color:#1f1f15;transform-origin:0 100%;transform:rotate(-45deg)">chunhui</div>
<div class="t" style="left:376.0px;top:172.5px;font-size:18px;font-family:'Liberation Mono',monospace;color:#1f1f15;transform-origin:0 100%;transform:rotate(-45deg)">2025-05-14</div>
<div class="t" style="left:558.0px;top:162.5px;font-size:18px;font-family:'Liberation Mono',monospace;color:#1f1f15;transform-origin:0 100%;transform:rotate(-45deg)">14:51</div>
<div class="t" style="left:765.0px;top:130.5px;font-size:18px;font-family:'Liberation Mono',monospace;color:#1f1f15;transform-origin:0 100%;transform:rotate(-45deg)">chunhui</div>
<div class="t" style="left:938.0px;top:130.5px;font-size:18px;font-family:'Liberation Mono',monospace;color:#1f1f15;transform-origin:0 100%;transform:rotate(-45deg)">2025-05-14</div>
<div class="t" style="left:1120.0px;top:120.5px;font-size:18px;font-family:'Liberation Mono',monospace;color:#1f1f15;transform-origin:0 100%;transform:rotate(-45deg)">14:51</div>
<div class="t" style="left:1327.0px;top:88.5px;font-size:18px;font-family:'Liberation Mono',monospace;color:#1f1f15;transform-origin:0 100%;transform:rotate(-45deg)">chunhui</div>
<div class="t" style="left:-99.0px;top:301.0px;font-size:18px;font-family:'Liberation Mono',monospace;color:#1f1f15;transform-origin:0 100%;transform:rotate(-45deg)">2025-05-14</div>
<div class="t" style="left:83.0px;top:291.0px;font-size:18px;font-family:'Liberation Mono',monospace;color:#1f1f15;transform-origin:0 100%;transform:rotate(-45deg)">14:51</div>
<div class="t" style="left:290.0px;top:259.0px;font-size:18px;font-family:'Liberation Mono',monospace;color:#1f1f15;transform-origin:0 100%;transform:rotate(-45deg)">chunhui</div>
<div class="t" style="left:463.0px;top:259.0px;font-size:18px;font-family:'Liberation Mono',monospace;color:#1f1f15;transform-origin:0 100%;transform:rotate(-45deg)">2025-05-14</div>
<div class="t" style="left:645.0px;top:249.0px;font-size:18px;font-family:'Liberation Mono',monospace;color:#1f1f15;transform-origin:0 100%;transform:rotate(-45deg)">14:51</div>
<div class="t" style="left:852.0px;top:217.0px;font-size:18px;font-family:'Liberation Mono',monospace;color:#1f1f15;transform-origin:0 100%;transform:rotate(-45deg)">chunhui</div>
<div class="t" style="left:1025.0px;top:217.0px;font-size:18px;font-family:'Liberation Mono',monospace;color:#1f1f15;transform-origin:0 100%;transform:rotate(-45deg)">2025-05-14</div>
<div class="t" style="left:1207.0px;top:207.0px;font-size:18px;font-family:'Liberation Mono',monospace;color:#1f1f15;transform-origin:0 100%;transform:rotate(-45deg)">14:51</div>
<div class="t" style="left:-185.0px;top:387.5px;font-size:18px;font-family:'Liberation Mono',monospace;color:#1f1f15;transform-origin:0 100%;transform:rotate(-45deg)">chunhui</div>
<div class="t" style="left:-12.0px;top:387.5px;font-size:18px;font-family:'Liberation Mono',monospace;color:#1f1f15;transform-origin:0 100%;transform:rotate(-45deg)">2025-05-14</div>
<div class="t" style="left:170.0px;top:377.5px;font-size:18px;font-family:'Liberation Mono',monospace;color:#1f1f15;transform-origin:0 100%;transform:rotate(-45deg)">14:51</div>
<div class="t" style="left:377.0px;top:345.5px;font-size:18px;font-family:'Liberation Mono',monospace;color:#1f1f15;transform-origin:0 100%;transform:rotate(-45deg)">chunhui</div>
<div class="t" style="left:550.0px;top:345.5px;font-size:18px;font-family:'Liberation Mono',monospace;color:#1f1f15;transform-origin:0 100%;transform:rotate(-45deg)">2025-05-14</div>
<div class="t" style="left:732.0px;top:335.5px;font-size:18px;font-family:'Liberation Mono',monospace;color:#1f1f15;transform-origin:0 100%;transform:rotate(-45deg)">14:51</div>
<div class="t" style="left:939.0px;top:303.5px;font-size:18px;font-family:'Liberation Mono',monospace;color:#1f1f15;transform-origin:0 100%;transform:rotate(-45deg)">chunhui</div>
<div class="t" style="left:1112.0px;top:303.5px;font-size:18px;font-family:'Liberation Mono',monospace;color:#1f1f15;transform-origin:0 100%;transform:rotate(-45deg)">2025-05-14</div>
<div class="t" style="left:1294.0px;top:293.5px;font-size:18px;font-family:'Liberation Mono',monospace;color:#1f1f15;transform-origin:0 100%;transform:rotate(-45deg)">14:51</div>
<div class="t" style="left:-98.0px;top:474.0px;font-size:18px;font-family:'Liberation Mono',monospace;color:#1f1f15;transform-origin:0 100%;transform:rotate(-45deg)">chunhui</div>
<div class="t" style="left:75.0px;top:474.0px;font-size:18px;font-family:'Liberation Mono',monospace;color:#1f1f15;transform-origin:0 100%;transform:rotate(-45deg)">2025-05-14</div>
<div class="t" style="left:257.0px;top:464.0px;font-size:18px;font-family:'Liberation Mono',monospace;color:#1f1f15;transform-origin:0 100%;transform:rotate(-45deg)">14:51</div>
<div class="t" style="left:464.0px;top:432.0px;font-size:18px;font-family:'Liberation Mono',monospace;color:#1f1f15;transform-origin:0 100%;transform:rotate(-45deg)">chunhui</div>
<div class="t" style="left:637.0px;top:432.0px;font-size:18px;font-family:'Liberation Mono',monospace;color:#1f1f15;transform-origin:0 100%;transform:rotate(-45deg)">2025-05-14</div>
<div class="t" style="left:819.0px;top:422.0px;font-size:18px;font-family:'Liberation Mono',monospace;color:#1f1f15;transform-origin:0 100%;transform:rotate(-45deg)">14:51</div>
<div class="t" style="left:1026.0px;top:390.0px;font-size:18px;font-family:'Liberation Mono',monospace;color:#1f1f15;transform-origin:0 100%;transform:rotate(-45deg)">chunhui</div>
<div class="t" style="left:1199.0px;top:390.0px;font-size:18px;font-family:'Liberation Mono',monospace;color:#1f1f15;transform-origin:0 100%;transform:rotate(-45deg)">2025-05-14</div>
<div class="t" style="left:1381.0px;top:380.0px;font-size:18px;font-family:'Liberation Mono',monospace;color:#1f1f15;transform-origin:0 100%;transform:rotate(-45deg)">14:51</div>
<div class="t" style="left:-11.0px;top:560.5px;font-size:18px;font-family:'Liberation Mono',monospace;color:#1f1f15;transform-origin:0 100%;transform:rotate(-45deg)">chunhui</div>
<div class="t" style="left:162.0px;top:560.5px;font-size:18px;font-family:'Liberation Mono',monospace;color:#1f1f15;transform-origin:0 100%;transform:rotate(-45deg)">2025-05-14</div>
<div class="t" style="left:344.0px;top:550.5px;font-size:18px;font-family:'Liberation Mono',monospace;color:#1f1f15;transform-origin:0 100%;transform:rotate(-45deg)">14:51</div>
<div class="t" style="left:551.0px;top:518.5px;font-size:18px;font-family:'Liberation Mono',monospace;color:#1f1f15;transform-origin:0 100%;transform:rotate(-45deg)">chunhui</div>
<div class="t" style="left:724.0px;top:518.5px;font-size:18px;font-family:'Liberation Mono',monospace;color:#1f1f15;transform-origin:0 100%;transform:rotate(-45deg)">2025-05-14</div>
<div class="t" style="left:906.0px;top:508.5px;font-size:18px;font-family:'Liberation Mono',monospace;color:#1f1f15;transform-origin:0 100%;transform:rotate(-45deg)">14:51</div>
<div class="t" style="left:1113.0px;top:476.5px;font-size:18px;font-family:'Liberation Mono',monospace;color:#1f1f15;transform-origin:0 100%;transform:rotate(-45deg)">chunhui</div>
<div class="t" style="left:1286.0px;top:476.5px;font-size:18px;font-family:'Liberation Mono',monospace;color:#1f1f15;transform-origin:0 100%;transform:rotate(-45deg)">2025-05-14</div>
<div class="t" style="left:-131.0px;top:679.0px;font-size:18px;font-family:'Liberation Mono',monospace;color:#1f1f15;transform-origin:0 100%;transform:rotate(-45deg)">14:51</div>
<div class="t" style="left:76.0px;top:647.0px;font-size:18px;font-family:'Liberation Mono',monospace;color:#1f1f15;transform-origin:0 100%;transform:rotate(-45deg)">chunhui</div>
<div class="t" style="left:249.0px;top:647.0px;font-size:18px;font-family:'Liberation Mono',monospace;color:#1f1f15;transform-origin:0 100%;transform:rotate(-45deg)">2025-05-14</div>
<div class="t" style="left:431.0px;top:637.0px;font-size:18px;font-family:'Liberation Mono',monospace;color:#1f1f15;transform-origin:0 100%;transform:rotate(-45deg)">14:51</div>
<div class="t" style="left:638.0px;top:605.0px;font-size:18px;font-family:'Liberation Mono',monospace;color:#1f1f15;transform-origin:0 100%;transform:rotate(-45deg)">chunhui</div>
<div class="t" style="left:811.0px;top:605.0px;font-size:18px;font-family:'Liberation Mono',monospace;color:#1f1f15;transform-origin:0 100%;transform:rotate(-45deg)">2025-05-14</div>
<div class="t" style="left:993.0px;top:595.0px;font-size:18px;font-family:'Liberation Mono',monospace;color:#1f1f15;transform-origin:0 100%;transform:rotate(-45deg)">14:51</div>
<div class="t" style="left:1200.0px;top:563.0px;font-size:18px;font-family:'Liberation Mono',monospace;color:#1f1f15;transform-origin:0 100%;transform:rotate(-45deg)">chunhui</div>
<div class="t" style="left:1373.0px;top:563.0px;font-size:18px;font-family:'Liberation Mono',monospace;color:#1f1f15;transform-origin:0 100%;transform:rotate(-45deg)">2025-05-14</div>
<div class="t" style="left:-44.0px;top:765.5px;font-size:18px;font-family:'Liberation Mono',monospace;color:#1f1f15;transform-origin:0 100%;transform:rotate(-45deg)">14:51</div>
<div class="t" style="left:163.0px;top:733.5px;font-size:18px;font-family:'Liberation Mono',monospace;color:#1f1f15;transform-origin:0 100%;transform:rotate(-45deg)">chunhui</div>
<div class="t" style="left:336.0px;top:733.5px;font-size:18px;font-family:'Liberation Mono',monospace;color:#1f1f15;transform-origin:0 100%;transform:rotate(-45deg)">2025-05-14</div>
<div class="t" style="left:518.0px;top:723.5px;font-size:18px;font-family:'Liberation Mono',monospace;color:#1f1f15;transform-origin:0 100%;transform:rotate(-45deg)">14:51</div>
<div class="t" style="left:725.0px;top:691.5px;font-size:18px;font-family:'Liberation Mono',monospace;color:#1f1f15;transform-origin:0 100%;transform:rotate(-45deg)">chunhui</div>
<div class="t" style="left:898.0px;top:691.5px;font-size:18px;font-family:'Liberation Mono',monospace;color:#1f1f15;transform-origin:0 100%;transform:rotate(-45deg)">2025-05-14</div>
<div class="t" style="left:1080.0px;top:681.5px;font-size:18px;font-family:'Liberation Mono',monospace;color:#1f1f15;transform-origin:0 100%;transform:rotate(-45deg)">14:51</div>
<div class="t" style="left:1287.0px;top:649.5px;font-size:18px;font-family:'Liberation Mono',monospace;color:#1f1f15;transform-origin:0 100%;transform:rotate(-45deg)">chunhui</div>
<div class="t" style="left:-139.0px;top:862.0px;font-size:18px;font-family:'Liberation Mono',monospace;color:#1f1f15;transform-origin:0 100%;transform:rotate(-45deg)">2025-05-14</div>
<div class="t" style="left:43.0px;top:852.0px;font-size:18px;font-family:'Liberation Mono',monospace;color:#1f1f15;transform-origin:0 100%;transform:rotate(-45deg)">14:51</div>
<div class="t" style="left:250.0px;top:820.0px;font-size:18px;font-family:'Liberation Mono',monospace;color:#1f1f15;transform-origin:0 100%;transform:rotate(-45deg)">chunhui</div>
<div class="t" style="left:423.0px;top:820.0px;font-size:18px;font-family:'Liberation Mono',monospace;color:#1f1f15;transform-origin:0 100%;transform:rotate(-45deg)">2025-05-14</div>
<div class="t" style="left:605.0px;top:810.0px;font-size:18px;font-family:'Liberation Mono',monospace;color:#1f1f15;transform-origin:0 100%;transform:rotate(-45deg)">14:51</div>
<div class="t" style="left:812.0px;top:778.0px;font-size:18px;font-family:'Liberation Mono',monospace;color:#1f1f15;transform-origin:0 100%;transform:rotate(-45deg)">chunhui</div>
<div class="t" style="left:985.0px;top:778.0px;font-size:18px;font-family:'Liberation Mono',monospace;color:#1f1f15;transform-origin:0 100%;transform:rotate(-45deg)">2025-05-14</div>
<div class="t" style="left:1167.0px;top:768.0px;font-size:18px;font-family:'Liberation Mono',monospace;color:#1f1f15;transform-origin:0 100%;transform:rotate(-45deg)">14:51</div>
<div class="t" style="left:1374.0px;top:736.0px;font-size:18px;font-family:'Liberation Mono',monospace;color:#1f1f15;transform-origin:0 100%;transform:rotate(-45deg)">chunhui</div>
<div class="t" style="left:-52.0px;top:948.5px;font-size:18px;font-family:'Liberation Mono',monospace;color:#1f1f15;transform-origin:0 100%;transform:rotate(-45deg)">2025-05-14</div>
<div class="t" style="left:130.0px;top:938.5px;font-size:18px;font-family:'Liberation Mono',monospace;color:#1f1f15;transform-origin:0 100%;transform:rotate(-45deg)">14:51</div>
<div class="t" style="left:337.0px;top:906.5px;font-size:18px;font-family:'Liberation Mono',monospace;color:#1f1f15;transform-origin:0 100%;transform:rotate(-45deg)">chunhui</div>
<div class="t" style="left:510.0px;top:906.5px;font-size:18px;font-family:'Liberation Mono',monospace;color:#1f1f15;transform-origin:0 100%;transform:rotate(-45deg)">2025-05-14</div>
<div class="t" style="left:692.0px;top:896.5px;font-size:18px;font-family:'Liberation Mono',monospace;color:#1f1f15;transform-origin:0 100%;transform:rotate(-45deg)">14:51</div>
<div class="t" style="left:899.0px;top:864.5px;font-size:18px;font-family:'Liberation Mono',monospace;color:#1f1f15;transform-origin:0 100%;transform:rotate(-45deg)">chunhui</div>
<div class="t" style="left:1072.0px;top:864.5px;font-size:18px;font-family:'Liberation Mono',monospace;color:#1f1f15;transform-origin:0 100%;transform:rotate(-45deg)">2025-05-14</div>
<div class="t" style="left:1254.0px;top:854.5px;font-size:18px;font-family:'Liberation Mono',monospace;color:#1f1f15;transform-origin:0 100%;transform:rotate(-45deg)">14:51</div>
<div class="t" style="left:986.0px;top:951.0px;font-size:18px;font-family:'Liberation Mono',monospace;color:#1f1f15;transform-origin:0 100%;transform:rotate(-45deg)">chunhui</div>
<div class="t" style="left:1159.0px;top:951.0px;font-size:18px;font-family:'Liberation Mono',monospace;color:#1f1f15;transform-origin:0 100%;transform:rotate(-45deg)">2025-05-14</div>
<div class="t" style="left:1341.0px;top:941.0px;font-size:18px;font-family:'Liberation Mono',monospace;color:#1f1f15;transform-origin:0 100%;transform:rotate(-45deg)">14:51</div>
</div>
<svg style="left:0;top:0" width="1440" height="1000" viewBox="0 0 1440 1000"><g clip-path="url(#cv)"></g><path d="M49 579.5 H1430 M842.5 105 V978" stroke="#e8e8f0" stroke-width="1"/><rect x="575" y="315" width="510" height="363" fill="none" stroke="#8a1a9a" stroke-width="2"/><path d="M575 450 V557" stroke="#ffcc00" stroke-width="2"/><path d="M575 450 H644 V557 H575" fill="none" stroke="#8a1a9a" stroke-width="2"/><rect x="586" y="433" width="16" height="15" fill="#ff0000"/><rect x="586" y="559" width="16" height="15" fill="#ff0000"/><rect x="645" y="471" width="16" height="9" fill="#ff0000"/><rect x="645" y="491" width="16" height="9" fill="#ff0000"/><rect x="645" y="507" width="16" height="9" fill="#ff0000"/><rect x="645" y="527" width="16" height="9" fill="#ff0000"/><rect x="628" y="437.5" width="17" height="9" rx="4.5" fill="none" stroke="#8a8a8a" stroke-width="2"/><rect x="628" y="560.5" width="17" height="9" rx="4.5" fill="none" stroke="#8a8a8a" stroke-width="2"/><path d="M594.5 441.5 L605.5 452.5 M605.5 441.5 L594.5 452.5" stroke="#ffcc00" stroke-width="2.8"/><path d="M639.5 464.5 L650.5 475.5 M650.5 464.5 L639.5 475.5" stroke="#ffcc00" stroke-width="2.8"/><path d="M639.5 484.5 L650.5 495.5 M650.5 484.5 L639.5 495.5" stroke="#ffcc00" stroke-width="2.8"/><path d="M639.5 500.5 L650.5 511.5 M650.5 500.5 L639.5 511.5" stroke="#ffcc00" stroke-width="2.8"/><path d="M639.5 519.5 L650.5 530.5 M650.5 519.5 L639.5 530.5" stroke="#ffcc00" stroke-width="2.8"/><path d="M580.5 550.5 L591.5 561.5 M591.5 550.5 L580.5 561.5" stroke="#ffcc00" stroke-width="2.8"/><rect x="804" y="507" width="10.5" height="21" fill="#ff0000"/><rect x="823.5" y="507" width="10.5" height="21" fill="#ff0000"/><rect x="839.5" y="507" width="10.5" height="21" fill="#ff0000"/><rect x="859.5" y="507" width="10.5" height="21" fill="#ff0000"/><circle cx="874" cy="518.5" r="2.5" fill="none" stroke="#8a8a8a" stroke-width="1.4"/><path d="M797.5 558 V528 H876.5 V558" fill="none" stroke="#ffcc00" stroke-width="2"/><rect x="812" y="531.5" width="12" height="22" rx="6" fill="none" stroke="#8a8a8a" stroke-width="2.4"/><rect x="849.5" y="531.5" width="12" height="22" rx="6" fill="none" stroke="#8a8a8a" stroke-width="2.4"/><path d="M788 557 H886" stroke="#8a1a9a" stroke-width="2"/><rect x="789" y="559.5" width="96" height="118" fill="none" stroke="#ffcc00" stroke-width="2"/><rect x="823" y="574.5" width="28.5" height="9.5" fill="none" stroke="#ffcc00" stroke-width="2"/><rect x="805" y="584.5" width="10" height="10" fill="none" stroke="#ffcc00" stroke-width="2"/><rect x="859" y="584.5" width="10" height="10" fill="none" stroke="#ffcc00" stroke-width="2"/><rect x="805.5" y="628" width="22" height="20" fill="none" stroke="#ffcc00" stroke-width="2"/><rect x="845.5" y="628" width="22" height="20" fill="none" stroke="#ffcc00" stroke-width="2"/><path d="M1085 420 H1005 V524.5 H1085" fill="none" stroke="#ffcc00" stroke-width="2"/><path d="M1109 420 H1117.5 V524.5 H1109" fill="none" stroke="#ffcc00" stroke-width="2"/><path d="M1072 420 V458 H1054 V487.5 H1072 V524.5" fill="none" stroke="#ffcc00" stroke-width="2"/><path d="M1005 472 H1021.5 L1018.5 479 H1041.5 L1038.5 472 H1054" fill="none" stroke="#ffcc00" stroke-width="2"/><path d="M1013.5 427 L1060.5 423.5 V428.5 L1018.5 432.5 V447 L1060.5 450 V455 L1013.5 452z" fill="none" stroke="#ffcc00" stroke-width="2" stroke-linejoin="miter"/><path d="M1028.5 432 V448 M1038 431 V449" stroke="#ffcc00" stroke-width="2"/><path d="M1013.5 494 L1060.5 490.5 V495.5 L1018.5 499.5 V514 L1060.5 517 V522 L1013.5 519z" fill="none" stroke="#ffcc00" stroke-width="2" stroke-linejoin="miter"/><path d="M1028.5 499 V515 M1038 498 V516" stroke="#ffcc00" stroke-width="2"/><rect x="1089.5" y="411.5" width="18" height="13" rx="6.5" fill="#2a2a2a" stroke="#7a7a7a" stroke-width="3"/><rect x="1089.5" y="518.5" width="18" height="13" rx="6.5" fill="#2a2a2a" stroke="#7a7a7a" stroke-width="3"/><circle cx="1108" cy="444" r="5.7" fill="#2a2a2a" stroke="#7a7a7a" stroke-width="3"/><circle cx="1108" cy="463.5" r="5.7" fill="#2a2a2a" stroke="#7a7a7a" stroke-width="3"/><circle cx="1108" cy="479.5" r="5.7" fill="#2a2a2a" stroke="#7a7a7a" stroke-width="3"/><circle cx="1108" cy="499" r="5.7" fill="#2a2a2a" stroke="#7a7a7a" stroke-width="3"/><circle cx="1112.5" cy="435.5" r="2.2" fill="none" stroke="#8a8a8a" stroke-width="1.3"/><path d="M1079.5 412.5 L1090.5 423.5 M1090.5 412.5 L1079.5 423.5" stroke="#ffcc00" stroke-width="2.8"/><path d="M1079.5 519.5 L1090.5 530.5 M1090.5 519.5 L1079.5 530.5" stroke="#ffcc00" stroke-width="2.8"/><path d="M865.5 314.5 V330 L869 326.5 L872 333 L874 332 L871 325.5 L876 325.5 Z" fill="#fff" stroke="#000" stroke-width="0.8"/></svg>
<div class="t" style="left:589px;top:434px;font-size:11px;color:#fff;">7</div>
<div class="t" style="left:589px;top:561px;font-size:11px;color:#fff;">8</div>
<div class="t" style="left:1092px;top:411px;font-size:12px;color:#ddd;">5</div>
<div class="t" style="left:1092px;top:518px;font-size:12px;color:#ddd;">5</div>
<div class="t" style="left:1104px;top:438.5px;font-size:11px;color:#ddd;">1</div>
<div class="t" style="left:1104px;top:458.0px;font-size:11px;color:#ddd;">2</div>
<div class="t" style="left:1104px;top:474.0px;font-size:11px;color:#ddd;">3</div>
<div class="t" style="left:1104px;top:493.5px;font-size:11px;color:#ddd;">4</div>
<div class="t" style="left:812px;top:531px;font-size:22px;color:#8a8a8a;transform:scaleX(0.8)">0</div>
<div class="t" style="left:849px;top:531px;font-size:22px;color:#8a8a8a;transform:scaleX(0.8)">0</div>
<div class="t" style="left:786px;top:497px;font-size:9px;color:#ffcc00;font-weight:bold;transform-origin:0 0;transform:scaleX(0.9)">U1</div>
<div class="t" style="left:662px;top:434px;font-size:9px;color:#ffcc00;font-weight:bold;transform:rotate(90deg)">U2</div>
<div class="t" style="left:1113px;top:416px;font-size:9px;color:#ffcc00;font-weight:bold;transform:rotate(90deg)">USB1</div>
<div class="a" style="left:1430px;top:62px;width:7px;height:931px;background:#e2e2e2;"></div>
<svg style="left:1430px;top:500px" width="7" height="60" viewBox="0 0 7 60"><rect x="0" y="4" width="7" height="51" fill="#f6f6f8"/><path d="M7 4.5 H2.5 V54.5 H7" fill="none" stroke="#6a6a5a" stroke-width="1"/><path d="M3 24 L6.5 28 L3 32z" fill="#6a6a5a"/></svg>
<div class="a" style="left:1437px;top:62px;width:452px;height:859px;background:#fbfbfe;"></div>
<div class="a" style="left:1889px;top:62px;width:23px;height:931px;background:#ececf0;"></div>
<div class="a" style="left:1889px;top:96px;width:23px;height:71px;background:#fbfbfe;"></div>
<svg style="left:1889px;top:62px" width="23" height="300" viewBox="0 0 23 300"><path d="M0.5 0 V34 M0 34.5 H23 M0.5 105 V300 M0 105.5 H23 M0 176.5 H23 M0 248.5 H23" stroke="#d8d8dc" stroke-width="1"/></svg>
<svg style="left:1898px;top:75px" width="6" height="9" viewBox="0 0 6 9"><path d="M0.5 0 H5.5 V1.5 L4.5 2 V4 L5.5 5 V6 H0.5 V5 L1.5 4 V2 L0.5 1.5Z" fill="#111"/><path d="M3 6 V8.5" stroke="#333" stroke-width="1"/></svg>
<div class="t" style="left:1901px;top:130px;font-size:13px;color:#3b82f6;transform:translate(-50%,-50%) rotate(90deg)">Layer</div>
<div class="t" style="left:1901px;top:202px;font-size:13px;color:#333;transform:translate(-50%,-50%) rotate(90deg)">Filter</div>
<div class="t" style="left:1901px;top:272px;font-size:13px;color:#333;transform:translate(-50%,-50%) rotate(90deg)">Property</div>
<div class="a" style="left:1447px;top:71px;width:134px;height:23px;border:1px solid #dcdce4;background:#fff"></div>
<div class="t" style="left:1452px;top:77px;font-size:13px;color:#333;font-weight:normal;font-family:'Liberation Sans',sans-serif;">Common(Default)</div>
<svg style="left:1560px;top:75px" width="16" height="16" viewBox="0 0 16 16"><path d="M5 6 l3 3 l3 -3" fill="none" stroke="#333" stroke-width="1.2"/></svg>
<div class="a" style="left:1587px;top:71px;width:53px;height:22px;border:1px solid #dcdce4;background:#fbfbfe"></div>
<div class="t" style="left:1598px;top:75px;font-size:13px;color:#3b82f6;font-weight:normal;font-family:'Liberation Sans',sans-serif;">Reset</div>
<svg style="left:1855px;top:65px" width="35" height="35" viewBox="0 0 35 35">
<path d="M10.3 10.3 H22.5 L25.3 14.4 H13.1Z" fill="none" stroke="#111" stroke-width="1.3" stroke-linejoin="round"/>
<path d="M9.8 14.5 L13 18.5 H16.5 M9.8 17.5 L13 21.5 H16.5 M9.8 20.5 L13 24.5 H16.5" fill="none" stroke="#111" stroke-width="1.2"/>
<circle cx="21.5" cy="20.8" r="3.6" fill="none" stroke="#111" stroke-width="1.2" stroke-dasharray="1.6 0.8"/><circle cx="21.5" cy="20.8" r="1.3" fill="none" stroke="#111" stroke-width="0.9"/>
</svg>
<div class="t" style="left:1449px;top:99px;font-size:12px;color:#3b82f6;font-weight:normal;font-family:'Liberation Sans',sans-serif;">All</div>
<div class="a" style="left:1474px;top:98px;width:1px;height:14px;background:#ddd"></div>
<div class="t" style="left:1487px;top:99px;font-size:12px;color:#444;font-weight:normal;font-family:'Liberation Sans',sans-serif;">Copper</div>
<div class="a" style="left:1539px;top:98px;width:1px;height:14px;background:#ddd"></div>
<div class="t" style="left:1552px;top:99px;font-size:12px;color:#444;font-weight:normal;font-family:'Liberation Sans',sans-serif;">Non-Copper</div>
<svg style="left:0;top:0" width="1912" height="1024" viewBox="0 0 1912 1024"><path d="M1462 131 Q1470 121.5 1478 131 Q1470 140.5 1462 131Z" fill="none" stroke="#c4c4cc" stroke-width="1.2"/><circle cx="1470" cy="131" r="3.3" fill="none" stroke="#c4c4cc" stroke-width="1.2"/><path d="M1465 137 L1475 125" stroke="#c4c4cc" stroke-width="1.2"/><path d="M1865 128.5 V126 A4 4 0 0 1 1873 126 V129" fill="none" stroke="#777" stroke-width="1.1"/><rect x="1868.5" y="129.5" width="12" height="8" fill="none" stroke="#777" stroke-width="1.1"/><path d="M1874.5 132.5 v2" stroke="#777" stroke-width="1.8"/><path d="M1443 158.5 L1450 151.5 V158.5Z" fill="#d8d8d8"/><path d="M1462 155 Q1470 145.5 1478 155 Q1470 164.5 1462 155Z" fill="none" stroke="#111" stroke-width="1.25"/><circle cx="1470" cy="155" r="3.3" fill="none" stroke="#111" stroke-width="1.5"/><path d="M1865 152.5 V150 A4 4 0 0 1 1873 150 V153" fill="none" stroke="#777" stroke-width="1.1"/><rect x="1868.5" y="153.5" width="12" height="8" fill="none" stroke="#777" stroke-width="1.1"/><path d="M1874.5 156.5 v2" stroke="#777" stroke-width="1.8"/><rect x="1472" y="167" width="417" height="24" fill="#fde6d6"/><rect x="1437" y="167" width="35" height="24" fill="#ff0000"/><path d="M1480 179 Q1488 169.5 1496 179 Q1488 188.5 1480 179Z" fill="none" stroke="#111" stroke-width="1.25"/><circle cx="1488" cy="179" r="3.3" fill="none" stroke="#111" stroke-width="1.5"/><path d="M1865 176.5 V174 A4 4 0 0 1 1873 174 V177" fill="none" stroke="#777" stroke-width="1.1"/><rect x="1868.5" y="177.5" width="12" height="8" fill="none" stroke="#777" stroke-width="1.1"/><path d="M1874.5 180.5 v2" stroke="#777" stroke-width="1.8"/><rect x="1437" y="191" width="35" height="24" fill="#ffcc00"/><path d="M1480 203 Q1488 193.5 1496 203 Q1488 212.5 1480 203Z" fill="none" stroke="#111" stroke-width="1.25"/><circle cx="1488" cy="203" r="3.3" fill="none" stroke="#111" stroke-width="1.5"/><path d="M1865 200.5 V198 A4 4 0 0 1 1873 198 V201" fill="none" stroke="#777" stroke-width="1.1"/><rect x="1868.5" y="201.5" width="12" height="8" fill="none" stroke="#777" stroke-width="1.1"/><path d="M1874.5 204.5 v2" stroke="#777" stroke-width="1.8"/><rect x="1437" y="215" width="35" height="24" fill="#800080"/><path d="M1480 227 Q1488 217.5 1496 227 Q1488 236.5 1480 227Z" fill="none" stroke="#111" stroke-width="1.25"/><circle cx="1488" cy="227" r="3.3" fill="none" stroke="#111" stroke-width="1.5"/><path d="M1865 224.5 V222 A4 4 0 0 1 1873 222 V225" fill="none" stroke="#777" stroke-width="1.1"/><rect x="1868.5" y="225.5" width="12" height="8" fill="none" stroke="#777" stroke-width="1.1"/><path d="M1874.5 228.5 v2" stroke="#777" stroke-width="1.8"/><rect x="1437" y="239" width="35" height="24" fill="#808080"/><path d="M1480 251 Q1488 241.5 1496 251 Q1488 260.5 1480 251Z" fill="none" stroke="#111" stroke-width="1.25"/><circle cx="1488" cy="251" r="3.3" fill="none" stroke="#111" stroke-width="1.5"/><path d="M1865 248.5 V246 A4 4 0 0 1 1873 246 V249" fill="none" stroke="#777" stroke-width="1.1"/><rect x="1868.5" y="249.5" width="12" height="8" fill="none" stroke="#777" stroke-width="1.1"/><path d="M1874.5 252.5 v2" stroke="#777" stroke-width="1.8"/><rect x="1437" y="263" width="35" height="24" fill="#33cc99"/><path d="M1480 275 Q1488 265.5 1496 275 Q1488 284.5 1480 275Z" fill="none" stroke="#111" stroke-width="1.25"/><circle cx="1488" cy="275" r="3.3" fill="none" stroke="#111" stroke-width="1.5"/><path d="M1865 272.5 V270 A4 4 0 0 1 1873 270 V273" fill="none" stroke="#777" stroke-width="1.1"/><rect x="1868.5" y="273.5" width="12" height="8" fill="none" stroke="#777" stroke-width="1.1"/><path d="M1874.5 276.5 v2" stroke="#777" stroke-width="1.8"/><path d="M1443 302.5 L1450 295.5 V302.5Z" fill="#d8d8d8"/><path d="M1462 299 Q1470 289.5 1478 299 Q1470 308.5 1462 299Z" fill="none" stroke="#111" stroke-width="1.25"/><circle cx="1470" cy="299" r="3.3" fill="none" stroke="#111" stroke-width="1.5"/><path d="M1865 296.5 V294 A4 4 0 0 1 1873 294 V297" fill="none" stroke="#777" stroke-width="1.1"/><rect x="1868.5" y="297.5" width="12" height="8" fill="none" stroke="#777" stroke-width="1.1"/><path d="M1874.5 300.5 v2" stroke="#777" stroke-width="1.8"/><rect x="1437" y="311" width="35" height="24" fill="#0000ff"/><path d="M1480 323 Q1488 313.5 1496 323 Q1488 332.5 1480 323Z" fill="none" stroke="#111" stroke-width="1.25"/><circle cx="1488" cy="323" r="3.3" fill="none" stroke="#111" stroke-width="1.5"/><path d="M1865 320.5 V318 A4 4 0 0 1 1873 318 V321" fill="none" stroke="#777" stroke-width="1.1"/><rect x="1868.5" y="321.5" width="12" height="8" fill="none" stroke="#777" stroke-width="1.1"/><path d="M1874.5 324.5 v2" stroke="#777" stroke-width="1.8"/><rect x="1437" y="335" width="35" height="24" fill="#66cc33"/><path d="M1480 347 Q1488 337.5 1496 347 Q1488 356.5 1480 347Z" fill="none" stroke="#111" stroke-width="1.25"/><circle cx="1488" cy="347" r="3.3" fill="none" stroke="#111" stroke-width="1.5"/><path d="M1865 344.5 V342 A4 4 0 0 1 1873 342 V345" fill="none" stroke="#777" stroke-width="1.1"/><rect x="1868.5" y="345.5" width="12" height="8" fill="none" stroke="#777" stroke-width="1.1"/><path d="M1874.5 348.5 v2" stroke="#777" stroke-width="1.8"/><rect x="1437" y="359" width="35" height="24" fill="#aa00ff"/><path d="M1480 371 Q1488 361.5 1496 371 Q1488 380.5 1480 371Z" fill="none" stroke="#111" stroke-width="1.25"/><circle cx="1488" cy="371" r="3.3" fill="none" stroke="#111" stroke-width="1.5"/><path d="M1865 368.5 V366 A4 4 0 0 1 1873 366 V369" fill="none" stroke="#777" stroke-width="1.1"/><rect x="1868.5" y="369.5" width="12" height="8" fill="none" stroke="#777" stroke-width="1.1"/><path d="M1874.5 372.5 v2" stroke="#777" stroke-width="1.8"/><rect x="1437" y="383" width="35" height="24" fill="#800000"/><path d="M1480 395 Q1488 385.5 1496 395 Q1488 404.5 1480 395Z" fill="none" stroke="#111" stroke-width="1.25"/><circle cx="1488" cy="395" r="3.3" fill="none" stroke="#111" stroke-width="1.5"/><path d="M1865 392.5 V390 A4 4 0 0 1 1873 390 V393" fill="none" stroke="#777" stroke-width="1.1"/><rect x="1868.5" y="393.5" width="12" height="8" fill="none" stroke="#777" stroke-width="1.1"/><path d="M1874.5 396.5 v2" stroke="#777" stroke-width="1.8"/><rect x="1437" y="407" width="35" height="24" fill="#5555ff"/><path d="M1480 419 Q1488 409.5 1496 419 Q1488 428.5 1480 419Z" fill="none" stroke="#111" stroke-width="1.25"/><circle cx="1488" cy="419" r="3.3" fill="none" stroke="#111" stroke-width="1.5"/><path d="M1865 416.5 V414 A4 4 0 0 1 1873 414 V417" fill="none" stroke="#777" stroke-width="1.1"/><rect x="1868.5" y="417.5" width="12" height="8" fill="none" stroke="#777" stroke-width="1.1"/><path d="M1874.5 420.5 v2" stroke="#777" stroke-width="1.8"/><path d="M1443 446.5 L1450 439.5 V446.5Z" fill="#d8d8d8"/><path d="M1462 443 Q1470 433.5 1478 443 Q1470 452.5 1462 443Z" fill="none" stroke="#111" stroke-width="1.25"/><circle cx="1470" cy="443" r="3.3" fill="none" stroke="#111" stroke-width="1.5"/><path d="M1865 440.5 V438 A4 4 0 0 1 1873 438 V441" fill="none" stroke="#777" stroke-width="1.1"/><rect x="1868.5" y="441.5" width="12" height="8" fill="none" stroke="#777" stroke-width="1.1"/><path d="M1874.5 444.5 v2" stroke="#777" stroke-width="1.8"/><rect x="1437" y="455" width="35" height="24" fill="#ff00ff"/><path d="M1480 467 Q1488 457.5 1496 467 Q1488 476.5 1480 467Z" fill="none" stroke="#111" stroke-width="1.25"/><circle cx="1488" cy="467" r="3.3" fill="none" stroke="#111" stroke-width="1.5"/><path d="M1865 464.5 V462 A4 4 0 0 1 1873 462 V465" fill="none" stroke="#777" stroke-width="1.1"/><rect x="1868.5" y="465.5" width="12" height="8" fill="none" stroke="#777" stroke-width="1.1"/><path d="M1874.5 468.5 v2" stroke="#777" stroke-width="1.8"/><rect x="1437" y="479" width="35" height="24" fill="#c0c0c0"/><path d="M1480 491 Q1488 481.5 1496 491 Q1488 500.5 1480 491Z" fill="none" stroke="#111" stroke-width="1.25"/><circle cx="1488" cy="491" r="3.3" fill="none" stroke="#111" stroke-width="1.5"/><path d="M1865 488.5 V486 A4 4 0 0 1 1873 486 V489" fill="none" stroke="#777" stroke-width="1.1"/><rect x="1868.5" y="489.5" width="12" height="8" fill="none" stroke="#777" stroke-width="1.1"/><path d="M1874.5 492.5 v2" stroke="#777" stroke-width="1.8"/><rect x="1437" y="503" width="35" height="24" fill="#ffffff"/><path d="M1480 515 Q1488 505.5 1496 515 Q1488 524.5 1480 515Z" fill="none" stroke="#111" stroke-width="1.25"/><circle cx="1488" cy="515" r="3.3" fill="none" stroke="#111" stroke-width="1.5"/><path d="M1865 512.5 V510 A4 4 0 0 1 1873 510 V513" fill="none" stroke="#777" stroke-width="1.1"/><rect x="1868.5" y="513.5" width="12" height="8" fill="none" stroke="#777" stroke-width="1.1"/><path d="M1874.5 516.5 v2" stroke="#777" stroke-width="1.8"/><rect x="1437" y="527" width="35" height="24" fill="#f022f0"/><path d="M1480 539 Q1488 529.5 1496 539 Q1488 548.5 1480 539Z" fill="none" stroke="#111" stroke-width="1.25"/><circle cx="1488" cy="539" r="3.3" fill="none" stroke="#111" stroke-width="1.5"/><path d="M1865 536.5 V534 A4 4 0 0 1 1873 534 V537" fill="none" stroke="#777" stroke-width="1.1"/><rect x="1868.5" y="537.5" width="12" height="8" fill="none" stroke="#777" stroke-width="1.1"/><path d="M1874.5 540.5 v2" stroke="#777" stroke-width="1.8"/><rect x="1437" y="551" width="35" height="24" fill="#108080"/><path d="M1480 563 Q1488 553.5 1496 563 Q1488 572.5 1480 563Z" fill="none" stroke="#111" stroke-width="1.25"/><circle cx="1488" cy="563" r="3.3" fill="none" stroke="#111" stroke-width="1.5"/><path d="M1865 560.5 V558 A4 4 0 0 1 1873 558 V561" fill="none" stroke="#777" stroke-width="1.1"/><rect x="1868.5" y="561.5" width="12" height="8" fill="none" stroke="#777" stroke-width="1.1"/><path d="M1874.5 564.5 v2" stroke="#777" stroke-width="1.8"/><rect x="1437" y="575" width="35" height="24" fill="#6464ff"/><path d="M1480 587 Q1488 577.5 1496 587 Q1488 596.5 1480 587Z" fill="none" stroke="#111" stroke-width="1.25"/><circle cx="1488" cy="587" r="3.3" fill="none" stroke="#111" stroke-width="1.5"/><rect x="1868" y="586.5" width="11" height="8" fill="none" stroke="#2a8cff" stroke-width="1.2"/><path d="M1869.8 586.5 V583.5 A3.7 3.7 0 0 1 1877.2 583.5 V586.5" fill="none" stroke="#2a8cff" stroke-width="1.2"/><path d="M1873.5 589 v2.5" stroke="#2a8cff" stroke-width="1.8"/><path d="M1443 614.5 L1450 607.5 V614.5Z" fill="#d8d8d8"/><path d="M1462 611 Q1470 601.5 1478 611 Q1470 620.5 1462 611Z" fill="none" stroke="#c4c4cc" stroke-width="1.2"/><circle cx="1470" cy="611" r="3.3" fill="none" stroke="#c4c4cc" stroke-width="1.2"/><path d="M1465 617 L1475 605" stroke="#c4c4cc" stroke-width="1.2"/><path d="M1865 608.5 V606 A4 4 0 0 1 1873 606 V609" fill="none" stroke="#777" stroke-width="1.1"/><rect x="1868.5" y="609.5" width="12" height="8" fill="none" stroke="#777" stroke-width="1.1"/><path d="M1874.5 612.5 v2" stroke="#777" stroke-width="1.8"/><rect x="1437" y="623" width="35" height="24" fill="#00cccc"/><path d="M1480 635 Q1488 625.5 1496 635 Q1488 644.5 1480 635Z" fill="none" stroke="#c4c4cc" stroke-width="1.2"/><circle cx="1488" cy="635" r="3.3" fill="none" stroke="#c4c4cc" stroke-width="1.2"/><path d="M1483 641 L1493 629" stroke="#c4c4cc" stroke-width="1.2"/><path d="M1865 632.5 V630 A4 4 0 0 1 1873 630 V633" fill="none" stroke="#777" stroke-width="1.1"/><rect x="1868.5" y="633.5" width="12" height="8" fill="none" stroke="#777" stroke-width="1.1"/><path d="M1874.5 636.5 v2" stroke="#777" stroke-width="1.8"/><rect x="1437" y="647" width="35" height="24" fill="#66ffcc"/><path d="M1480 659 Q1488 649.5 1496 659 Q1488 668.5 1480 659Z" fill="none" stroke="#c4c4cc" stroke-width="1.2"/><circle cx="1488" cy="659" r="3.3" fill="none" stroke="#c4c4cc" stroke-width="1.2"/><path d="M1483 665 L1493 653" stroke="#c4c4cc" stroke-width="1.2"/><path d="M1865 656.5 V654 A4 4 0 0 1 1873 654 V657" fill="none" stroke="#777" stroke-width="1.1"/><rect x="1868.5" y="657.5" width="12" height="8" fill="none" stroke="#777" stroke-width="1.1"/><path d="M1874.5 660.5 v2" stroke="#777" stroke-width="1.8"/><rect x="1437" y="671" width="35" height="24" fill="#cc9999"/><path d="M1480 683 Q1488 673.5 1496 683 Q1488 692.5 1480 683Z" fill="none" stroke="#c4c4cc" stroke-width="1.2"/><circle cx="1488" cy="683" r="3.3" fill="none" stroke="#c4c4cc" stroke-width="1.2"/><path d="M1483 689 L1493 677" stroke="#c4c4cc" stroke-width="1.2"/><path d="M1865 680.5 V678 A4 4 0 0 1 1873 678 V681" fill="none" stroke="#777" stroke-width="1.1"/><rect x="1868.5" y="681.5" width="12" height="8" fill="none" stroke="#777" stroke-width="1.1"/><path d="M1874.5 684.5 v2" stroke="#777" stroke-width="1.8"/><rect x="1437" y="695" width="35" height="24" fill="#ff99ff"/><path d="M1480 707 Q1488 697.5 1496 707 Q1488 716.5 1480 707Z" fill="none" stroke="#c4c4cc" stroke-width="1.2"/><circle cx="1488" cy="707" r="3.3" fill="none" stroke="#c4c4cc" stroke-width="1.2"/><path d="M1483 713 L1493 701" stroke="#c4c4cc" stroke-width="1.2"/><path d="M1865 704.5 V702 A4 4 0 0 1 1873 702 V705" fill="none" stroke="#777" stroke-width="1.1"/><rect x="1868.5" y="705.5" width="12" height="8" fill="none" stroke="#777" stroke-width="1.1"/><path d="M1874.5 708.5 v2" stroke="#777" stroke-width="1.8"/><path d="M1443 734.5 L1450 727.5 V734.5Z" fill="#d8d8d8"/><path d="M1462 731 Q1470 721.5 1478 731 Q1470 740.5 1462 731Z" fill="none" stroke="#111" stroke-width="1.25"/><circle cx="1470" cy="731" r="3.3" fill="none" stroke="#111" stroke-width="1.5"/><path d="M1865 728.5 V726 A4 4 0 0 1 1873 726 V729" fill="none" stroke="#777" stroke-width="1.1"/><rect x="1868.5" y="729.5" width="12" height="8" fill="none" stroke="#777" stroke-width="1.1"/><path d="M1874.5 732.5 v2" stroke="#777" stroke-width="1.8"/><rect x="1437" y="743" width="35" height="24" fill="#66ff99"/><path d="M1480 755 Q1488 745.5 1496 755 Q1488 764.5 1480 755Z" fill="none" stroke="#111" stroke-width="1.25"/><circle cx="1488" cy="755" r="3.3" fill="none" stroke="#111" stroke-width="1.5"/><path d="M1865 752.5 V750 A4 4 0 0 1 1873 750 V753" fill="none" stroke="#777" stroke-width="1.1"/><rect x="1868.5" y="753.5" width="12" height="8" fill="none" stroke="#777" stroke-width="1.1"/><path d="M1874.5 756.5 v2" stroke="#777" stroke-width="1.8"/><rect x="1437" y="767" width="35" height="24" fill="#ffccff"/><path d="M1480 779 Q1488 769.5 1496 779 Q1488 788.5 1480 779Z" fill="none" stroke="#111" stroke-width="1.25"/><circle cx="1488" cy="779" r="3.3" fill="none" stroke="#111" stroke-width="1.5"/><path d="M1865 776.5 V774 A4 4 0 0 1 1873 774 V777" fill="none" stroke="#777" stroke-width="1.1"/><rect x="1868.5" y="777.5" width="12" height="8" fill="none" stroke="#777" stroke-width="1.1"/><path d="M1874.5 780.5 v2" stroke="#777" stroke-width="1.8"/><rect x="1437" y="791" width="35" height="24" fill="#0066cc"/><path d="M1480 803 Q1488 793.5 1496 803 Q1488 812.5 1480 803Z" fill="none" stroke="#111" stroke-width="1.25"/><circle cx="1488" cy="803" r="3.3" fill="none" stroke="#111" stroke-width="1.5"/><path d="M1865 800.5 V798 A4 4 0 0 1 1873 798 V801" fill="none" stroke="#777" stroke-width="1.1"/><rect x="1868.5" y="801.5" width="12" height="8" fill="none" stroke="#777" stroke-width="1.1"/><path d="M1874.5 804.5 v2" stroke="#777" stroke-width="1.8"/><g transform="translate(1455 180) rotate(45) scale(1.22)"><rect x="-2.6" y="-8" width="5.2" height="11" fill="#f5c518" stroke="#b07000" stroke-width="0.5"/><rect x="-2.6" y="-10.5" width="5.2" height="2.8" fill="#e99" stroke="#b07000" stroke-width="0.4"/><path d="M-2.6 3 L0 8.5 L2.6 3z" fill="#fde6c0"/><path d="M-0.9 6.6 L0 8.5 L0.9 6.6z" fill="#222"/></g></svg>
<div class="t" style="left:1486px;top:125px;font-size:12px;color:#333;font-weight:normal;font-family:'Liberation Sans',sans-serif;">All</div>
<div class="t" style="left:1486px;top:149px;font-size:12px;color:#333;font-weight:normal;font-family:'Liberation Sans',sans-serif;">Top Side</div>
<div class="t" style="left:1504px;top:173px;font-size:12px;color:#333;font-weight:normal;font-family:'Liberation Sans',sans-serif;">1 Top Layer</div>
<div class="t" style="left:1504px;top:197px;font-size:12px;color:#333;font-weight:normal;font-family:'Liberation Sans',sans-serif;">3 Top Silkscreen Layer</div>
<div class="t" style="left:1504px;top:221px;font-size:12px;color:#333;font-weight:normal;font-family:'Liberation Sans',sans-serif;">5 Top Solder Mask Layer</div>
<div class="t" style="left:1504px;top:245px;font-size:12px;color:#333;font-weight:normal;font-family:'Liberation Sans',sans-serif;">7 Top Paste Mask Layer</div>
<div class="t" style="left:1504px;top:269px;font-size:12px;color:#333;font-weight:normal;font-family:'Liberation Sans',sans-serif;">9 Top Assembly Layer</div>
<div class="t" style="left:1486px;top:293px;font-size:12px;color:#333;font-weight:normal;font-family:'Liberation Sans',sans-serif;">Bottom Side</div>
<div class="t" style="left:1504px;top:317px;font-size:12px;color:#333;font-weight:normal;font-family:'Liberation Sans',sans-serif;">2 Bottom Layer</div>
<div class="t" style="left:1504px;top:341px;font-size:12px;color:#333;font-weight:normal;font-family:'Liberation Sans',sans-serif;">4 Bottom Silkscreen Layer</div>
<div class="t" style="left:1504px;top:365px;font-size:12px;color:#333;font-weight:normal;font-family:'Liberation Sans',sans-serif;">6 Bottom Solder Mask Layer</div>
<div class="t" style="left:1504px;top:389px;font-size:12px;color:#333;font-weight:normal;font-family:'Liberation Sans',sans-serif;">8 Bottom Paste Mask Layer</div>
<div class="t" style="left:1504px;top:413px;font-size:12px;color:#333;font-weight:normal;font-family:'Liberation Sans',sans-serif;">10 Bottom Assembly Layer</div>
<div class="t" style="left:1486px;top:437px;font-size:12px;color:#333;font-weight:normal;font-family:'Liberation Sans',sans-serif;">Other</div>
<div class="t" style="left:1504px;top:461px;font-size:12px;color:#333;font-weight:normal;font-family:'Liberation Sans',sans-serif;">11 Board Outline Layer</div>
<div class="t" style="left:1504px;top:485px;font-size:12px;color:#333;font-weight:normal;font-family:'Liberation Sans',sans-serif;">12 Multi-Layer</div>
<div class="t" style="left:1504px;top:509px;font-size:12px;color:#333;font-weight:normal;font-family:'Liberation Sans',sans-serif;">13 Document Layer</div>
<div class="t" style="left:1504px;top:533px;font-size:12px;color:#333;font-weight:normal;font-family:'Liberation Sans',sans-serif;">14 Mechanical Layer</div>
<div class="t" style="left:1504px;top:557px;font-size:12px;color:#333;font-weight:normal;font-family:'Liberation Sans',sans-serif;">56 Drill Drawing Layer</div>
<div class="t" style="left:1504px;top:581px;font-size:12px;color:#333;font-weight:normal;font-family:'Liberation Sans',sans-serif;">57 Ratline Layer</div>
<div class="t" style="left:1486px;top:605px;font-size:12px;color:#333;font-weight:normal;font-family:'Liberation Sans',sans-serif;">Component</div>
<div class="t" style="left:1504px;top:629px;font-size:12px;color:#333;font-weight:normal;font-family:'Liberation Sans',sans-serif;">48 Component Shape Layer</div>
<div class="t" style="left:1504px;top:653px;font-size:12px;color:#333;font-weight:normal;font-family:'Liberation Sans',sans-serif;">49 Component Marking Layer</div>
<div class="t" style="left:1504px;top:677px;font-size:12px;color:#333;font-weight:normal;font-family:'Liberation Sans',sans-serif;">50 Pin Soldering Layer</div>
<div class="t" style="left:1504px;top:701px;font-size:12px;color:#333;font-weight:normal;font-family:'Liberation Sans',sans-serif;">51 Pin Floating Layer</div>
<div class="t" style="left:1486px;top:725px;font-size:12px;color:#333;font-weight:normal;font-family:'Liberation Sans',sans-serif;">3D Shell</div>
<div class="t" style="left:1504px;top:749px;font-size:12px;color:#333;font-weight:normal;font-family:'Liberation Sans',sans-serif;">53 Outline Layer</div>
<div class="t" style="left:1504px;top:773px;font-size:12px;color:#333;font-weight:normal;font-family:'Liberation Sans',sans-serif;">54 Top Layer</div>
<div class="t" style="left:1504px;top:797px;font-size:12px;color:#333;font-weight:normal;font-family:'Liberation Sans',sans-serif;">55 Bottom Layer</div>
<div class="a" style="left:1437px;top:921px;width:475px;height:72px;background:#efeff0;"></div>
<svg style="left:1437px;top:921px" width="475" height="72" viewBox="0 0 475 72"><path d="M0 0.5 H475 M0 24.5 H475 M0 48.5 H475" stroke="#d6d6c4" stroke-width="1"/></svg>
<div class="t" style="left:1478px;top:927px;font-size:12px;color:#333;font-weight:normal;font-family:'Liberation Sans',sans-serif;">S</div>
<div class="t" style="left:1496px;top:927px;font-size:12px;color:#333;font-weight:normal;font-family:'Liberation Sans',sans-serif;">202%</div>
<div class="t" style="left:1705px;top:927px;font-size:12px;color:#333;font-weight:normal;font-family:'Liberation Sans',sans-serif;">G</div>
<div class="t" style="left:1724px;top:927px;font-size:12px;color:#333;font-weight:normal;font-family:'Liberation Sans',sans-serif;">5, 5mil</div>
<div class="t" style="left:1478px;top:951px;font-size:12px;color:#333;font-weight:normal;font-family:'Liberation Sans',sans-serif;">X</div>
<div class="t" style="left:1496px;top:951px;font-size:12px;color:#333;font-weight:normal;font-family:'Liberation Sans',sans-serif;">110mil</div>
<div class="t" style="left:1478px;top:975px;font-size:12px;color:#333;font-weight:normal;font-family:'Liberation Sans',sans-serif;">Y</div>
<div class="t" style="left:1496px;top:975px;font-size:12px;color:#333;font-weight:normal;font-family:'Liberation Sans',sans-serif;">1310mil</div>
<div class="a" style="left:1437px;top:993px;width:475px;height:7px;background:#d8d8d0;"></div>
<div class="a" style="left:49px;top:978px;width:1381px;height:15px;background:#35353d;"></div>
<div class="a" style="left:49px;top:978px;width:1381px;height:15px;overflow:hidden">
<div class="a" style="left:38px;top:0;width:1px;height:15px;background:#1c1c22"></div><div class="a" style="left:44px;top:4px;width:7px;height:7px;background:#ff0000;box-shadow:inset 0 0 0 1px rgba(200,200,200,.5)"></div><div class="t" style="left:57px;top:2px;font-size:12px;color:#d8d8d4;transform-origin:0 0;transform:scaleX(0.993)">Top</div>
<div class="a" style="left:87px;top:0;width:1px;height:15px;background:#1c1c22"></div><div class="a" style="left:93px;top:4px;width:7px;height:7px;background:#0000ff;box-shadow:inset 0 0 0 1px rgba(200,200,200,.5)"></div><div class="t" style="left:106px;top:2px;font-size:12px;color:#d8d8d4;transform-origin:0 0;transform:scaleX(0.993)">Bottom</div>
<div class="a" style="left:156px;top:0;width:1px;height:15px;background:#1c1c22"></div><div class="a" style="left:162px;top:4px;width:7px;height:7px;background:#ffcc00;box-shadow:inset 0 0 0 1px rgba(200,200,200,.5)"></div><div class="t" style="left:175px;top:2px;font-size:12px;color:#d8d8d4;transform-origin:0 0;transform:scaleX(0.993)">Top Silkscreen</div>
<div class="a" style="left:262px;top:0;width:1px;height:15px;background:#1c1c22"></div><div class="a" style="left:268px;top:4px;width:7px;height:7px;background:#66cc33;box-shadow:inset 0 0 0 1px rgba(200,200,200,.5)"></div><div class="t" style="left:281px;top:2px;font-size:12px;color:#d8d8d4;transform-origin:0 0;transform:scaleX(0.993)">Bottom Silkscreen</div>
<div class="a" style="left:389px;top:0;width:1px;height:15px;background:#1c1c22"></div><div class="a" style="left:395px;top:4px;width:7px;height:7px;background:#800080;box-shadow:inset 0 0 0 1px rgba(200,200,200,.5)"></div><div class="t" style="left:408px;top:2px;font-size:12px;color:#d8d8d4;transform-origin:0 0;transform:scaleX(0.993)">Top Solder Mask</div>
<div class="a" style="left:506.6px;top:0;width:1px;height:15px;background:#1c1c22"></div><div class="a" style="left:512.6px;top:4px;width:7px;height:7px;background:#aa00ff;box-shadow:inset 0 0 0 1px rgba(200,200,200,.5)"></div><div class="t" style="left:525.6px;top:2px;font-size:12px;color:#d8d8d4;transform-origin:0 0;transform:scaleX(0.993)">Bottom Solder Mask</div>
<div class="a" style="left:644.2px;top:0;width:1px;height:15px;background:#1c1c22"></div><div class="a" style="left:650.2px;top:4px;width:7px;height:7px;background:#808080;box-shadow:inset 0 0 0 1px rgba(200,200,200,.5)"></div><div class="t" style="left:663.2px;top:2px;font-size:12px;color:#d8d8d4;transform-origin:0 0;transform:scaleX(0.993)">Top Paste Mask</div>
<div class="a" style="left:758px;top:0;width:1px;height:15px;background:#1c1c22"></div><div class="a" style="left:764px;top:4px;width:7px;height:7px;background:#800000;box-shadow:inset 0 0 0 1px rgba(200,200,200,.5)"></div><div class="t" style="left:777px;top:2px;font-size:12px;color:#d8d8d4;transform-origin:0 0;transform:scaleX(0.993)">Bottom Paste Mask</div>
<div class="a" style="left:891.7px;top:0;width:1px;height:15px;background:#1c1c22"></div><div class="a" style="left:897.7px;top:4px;width:7px;height:7px;background:#33cc99;box-shadow:inset 0 0 0 1px rgba(200,200,200,.5)"></div><div class="t" style="left:910.7px;top:2px;font-size:12px;color:#d8d8d4;transform-origin:0 0;transform:scaleX(0.993)">Top Assembly</div>
<div class="a" style="left:994.0999999999999px;top:0;width:1px;height:15px;background:#1c1c22"></div><div class="a" style="left:1000.0999999999999px;top:4px;width:7px;height:7px;background:#5555ff;box-shadow:inset 0 0 0 1px rgba(200,200,200,.5)"></div><div class="t" style="left:1013.0999999999999px;top:2px;font-size:12px;color:#d8d8d4;transform-origin:0 0;transform:scaleX(0.993)">Bottom Assembly</div>
<div class="a" style="left:1116.4px;top:0;width:1px;height:15px;background:#1c1c22"></div><div class="a" style="left:1122.4px;top:4px;width:7px;height:7px;background:#ff00ff;box-shadow:inset 0 0 0 1px rgba(200,200,200,.5)"></div><div class="t" style="left:1135.4px;top:2px;font-size:12px;color:#d8d8d4;transform-origin:0 0;transform:scaleX(0.993)">Board Outline</div>
<div class="a" style="left:1218.6px;top:0;width:1px;height:15px;background:#1c1c22"></div><div class="a" style="left:1224.6px;top:4px;width:7px;height:7px;background:#c0c0c0;box-shadow:inset 0 0 0 1px rgba(200,200,200,.5)"></div><div class="t" style="left:1237.6px;top:2px;font-size:12px;color:#d8d8d4;transform-origin:0 0;transform:scaleX(0.993)">Multi</div>
<div class="a" style="left:1272.6px;top:0;width:1px;height:15px;background:#1c1c22"></div><div class="a" style="left:1278.6px;top:4px;width:7px;height:7px;background:#ffffff;box-shadow:inset 0 0 0 1px rgba(200,200,200,.5)"></div><div class="t" style="left:1291.6px;top:2px;font-size:12px;color:#d8d8d4;transform-origin:0 0;transform:scaleX(0.993)">Document</div>
<div class="a" style="left:1353.6px;top:0;width:1px;height:15px;background:#1c1c22"></div><div class="a" style="left:1359.6px;top:4px;width:7px;height:7px;background:#f022f0;box-shadow:inset 0 0 0 1px rgba(200,200,200,.5)"></div><div class="t" style="left:1372.6px;top:2px;font-size:12px;color:#d8d8d4;transform-origin:0 0;transform:scaleX(0.993)">Mechanical</div>
</div>
<div class="a" style="left:0px;top:993px;width:1437px;height:7px;background:#d8d8d0;"></div>
<div class="a" style="left:0px;top:1000px;width:1912px;height:24px;background:#ececf0;"></div>
<svg style="left:10px;top:1011px" width="6" height="9" viewBox="0 0 6 9"><path d="M0.5 0 H5.5 V1.5 L4.5 2 V4 L5.5 5 V6 H0.5 V5 L1.5 4 V2 L0.5 1.5Z" fill="#111"/><path d="M3 6 V8.5" stroke="#333" stroke-width="1"/></svg>
<div class="a" style="left:33px;top:1000px;width:70px;height:24px;background:#fbfbfe;"></div>
<svg style="left:0;top:1000px" width="500" height="24" viewBox="0 0 500 24"><path d="M32.5 0 V24 M103.5 0 V24 M174.5 0 V24 M315.5 0 V24 M385.5 0 V24 M463.5 0 V24" stroke="#d8d8dc" stroke-width="1"/></svg>
<div class="t" style="left:48px;top:1006px;font-size:12px;color:#3b82f6;font-weight:normal;font-family:'Liberation Sans',sans-serif;">Library</div>
<div class="t" style="left:127px;top:1005px;font-size:12px;color:#333;font-weight:normal;font-family:'Liberation Sans',sans-serif;">Log</div>
<div class="t" style="left:183px;top:1006px;font-size:12px;color:#333;font-weight:normal;font-family:'Liberation Sans',sans-serif;">Device Standardization</div>
<div class="t" style="left:338px;top:1006px;font-size:12px;color:#333;font-weight:normal;font-family:'Liberation Sans',sans-serif;">DRC</div>
<div class="t" style="left:395px;top:1006px;font-size:12px;color:#333;font-weight:normal;font-family:'Liberation Sans',sans-serif;">Find Result</div>
<svg style="left:930px;top:993px" width="60" height="7" viewBox="0 0 60 7"><path d="M3 1.5 H57 M3 4.5 H57" stroke="#999" stroke-width="1"/></svg>
<svg style="left:1780px;top:880px" width="132" height="144" viewBox="1780 880 132 144">
<path d="M1792 949 V893 a4 4 0 0 1 4 -4 H1888 a4 4 0 0 1 4 4 V949z" fill="#5b8ef2"/>
<circle cx="1880" cy="900.5" r="6.6" fill="none" stroke="#fff" stroke-width="1.3"/>
<path d="M1877 897.5 l6 6 M1883 897.5 l-6 6" stroke="#fff" stroke-width="1.3"/>
<path d="M1829 929 H1815.5 a3 3 0 0 1 -3 -3 V908.5 a3 3 0 0 1 3 -3 H1847.5 a3 3 0 0 1 3 3 V918" fill="none" stroke="#fff" stroke-width="2.4"/>
<path d="M1815 928 L1816.5 937.5 L1825 929" fill="#5b8ef2" stroke="#fff" stroke-width="2.2" stroke-linejoin="round"/>
<rect x="1830.5" y="919.5" width="40" height="27.5" rx="3" fill="#5b8ef2" stroke="#fff" stroke-width="2.4"/>
<path d="M1855 947 L1864 950.5 L1866 946" fill="#5b8ef2" stroke="#fff" stroke-width="2"/>
<circle cx="1823.5" cy="915.5" r="2.3" fill="#fff"/>
<circle cx="1840.5" cy="933" r="2.4" fill="#fff"/><circle cx="1850.5" cy="933" r="2.4" fill="#fff"/><circle cx="1860.5" cy="933" r="2.4" fill="#fff"/>
</svg>
<div class="a" style="left:1651px;top:949px;width:258px;height:41px;background:#fdfdff;border-radius:9px;box-shadow:0 0 4px rgba(0,0,0,.12)"></div>
<svg style="left:1651px;top:949px" width="258" height="41" viewBox="0 0 258 41">
<g fill="#555"><circle cx="17" cy="15.5" r="1.3"/><circle cx="22" cy="15.5" r="1.3"/><circle cx="17" cy="20.5" r="1.3"/><circle cx="22" cy="20.5" r="1.3"/><circle cx="17" cy="25.5" r="1.3"/><circle cx="22" cy="25.5" r="1.3"/></g>
<rect x="42" y="12" width="5" height="17" rx="1" fill="#222"/><rect x="52" y="12" width="5" height="17" rx="1" fill="#222"/>
<rect x="176" y="6" width="72" height="28" rx="7" fill="#ee4444"/>
</svg>
<div class="t" style="left:1723px;top:963px;font-size:14px;color:#8a8a90;font-weight:normal;font-family:'Liberation Sans',sans-serif;">00:00 / 05:00</div>
<svg style="left:1827px;top:955px" width="72" height="28" viewBox="0 0 72 28"><g stroke="#fff" stroke-width="1.05" fill="none">
<path d="M9 8 l-2 4 h4 l-3 4 h4 M13 10 h7 M16.5 7 v6 M13 13 h7 M14 16 h5 v4 h-5z"/>
<path d="M23 10 h12 M29 7 v14 M25 12 h8 v4 h-8z M29 16 l-5 4 M29 16 l5 4"/>
<path d="M39 8 h8 v4 h-8 M37 14 h12 M43 12 v9 l-2 -1 M39 16 l-2 3 M47 16 l2 3"/>
<path d="M53 8 v12 M51 11 h6 M51 15 h6 M55 15 v5 M60 8 v9 M63 7 v14 l-2 -1"/>
</g></svg>
<svg style="left:40px;top:880px" width="160" height="144" viewBox="40 880 160 144">
<defs>
<radialGradient id="pg" cx="0.5" cy="0.42" r="0.62"><stop offset="0" stop-color="#f3d8de"/><stop offset="0.85" stop-color="#eed2d9"/><stop offset="1" stop-color="#dcb4bb"/></radialGradient>
<radialGradient id="wp" cx="0.5" cy="0.5" r="0.5"><stop offset="0" stop-color="#fff8f9"/><stop offset="0.75" stop-color="#fdf0f2"/><stop offset="1" stop-color="#f6d2d7" stop-opacity="0"/></radialGradient>
</defs>
<circle cx="84" cy="922" r="16.5" fill="#efd4da"/>
<circle cx="147" cy="922" r="16.5" fill="#efd4da"/>
<path d="M118 911 C162 911 186.5 935 186.5 963 C186.5 993 170 1016.5 118 1016.5 C66 1016.5 49.5 993 49.5 963 C49.5 935 74 911 118 911Z" fill="url(#pg)"/>
<ellipse cx="119" cy="974" rx="37" ry="23" fill="url(#wp)"/>
<circle cx="94.7" cy="931.6" r="3.2" fill="#3a3030"/>
<circle cx="139.7" cy="931.6" r="3.2" fill="#3a3030"/>
<ellipse cx="116.5" cy="938" rx="15" ry="10" fill="#e2a2aa"/>
<circle cx="111.3" cy="937.5" r="1.5" fill="#c9848c"/><circle cx="123" cy="937.5" r="1.5" fill="#c9848c"/>
<g stroke="#e59aa2" stroke-width="1.8" fill="none"><rect x="90.5" y="998" width="11.5" height="7"/><path d="M96.3 994 V1011"/></g>
<path d="M112 998 l3 -2 h7 l3 2 l-2 3 h-1 v8 h-8 v-8 h-1z" fill="#fbe9a8"/>
<path d="M145 997 q-4 -3 -8 0 q-1 3 4 4 q5 1 3 4 q-4 3 -8 0" fill="none" stroke="#fff" stroke-width="2.4"/>
<path d="M162 891 l3 14" stroke="#f2da96" stroke-width="3.5"/>
<path d="M181 891 l-9 7 l9 2 l-8 8" fill="none" stroke="#f2da96" stroke-width="3.2"/>
</svg>
<div class="t" style="left:119px;top:965px;font-size:25px;font-weight:bold;color:#222;transform:translateX(-50%) scaleX(0.84);letter-spacing:-0.5px">07:59</div>
</body></html>
